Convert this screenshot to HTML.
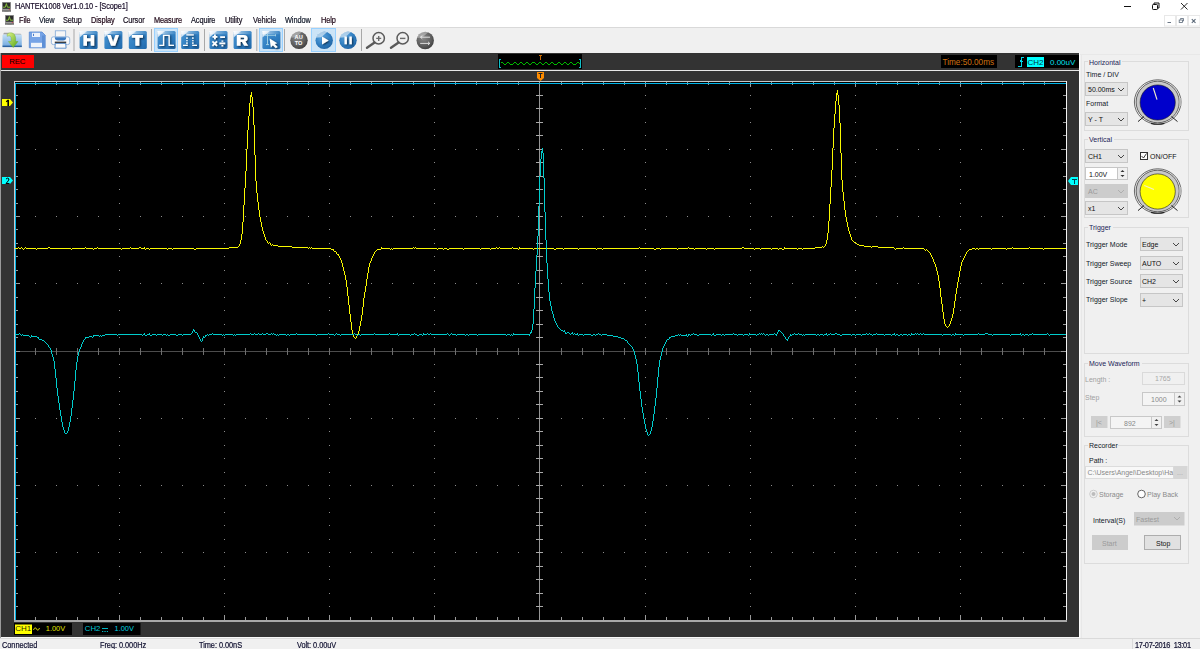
<!DOCTYPE html>
<html><head><meta charset="utf-8">
<style>
*{margin:0;padding:0;box-sizing:border-box}
html,body{width:1200px;height:649px;overflow:hidden;background:#f0f0f0;font-family:"Liberation Sans",sans-serif;position:relative}
.a{position:absolute}
.t{position:absolute;white-space:nowrap;font-size:8.4px;line-height:9px;color:#000;letter-spacing:-0.1px;transform:scaleX(0.88);transform-origin:0 0;-webkit-text-stroke:0.2px currentColor}
#title{left:0;top:0;width:1200px;height:13px;background:#fff}
#menu{left:0;top:13px;width:1200px;height:14px;background:#fff}
#tb{left:0;top:27px;width:1200px;height:26px;background:#f0f0f0}
#main{left:0;top:53px;width:1079px;height:585px;background:#333333;border-left:1px solid #9a9a9a}
#panel{left:1079px;top:53px;width:121px;height:585px;background:#f0f0f0;border-left:1px solid #fdfdfd}
#status{left:0;top:638px;width:1200px;height:11px;background:#f0f0f0;border-top:1px solid #dadada}
.grp{position:absolute;border:1px solid #dcdcdc;border-radius:0}
.glab{position:absolute;background:#f0f0f0;padding:0 2px;font-size:7.4px;line-height:8px;color:#1c2a5a;white-space:nowrap}
.cb{position:absolute;background:#e5e5e5;border:1px solid #c3c3c3;height:14px}
.cb .v{position:absolute;left:4px;top:2px;font-size:7.4px;line-height:9px;color:#111;white-space:nowrap}
.cb svg{position:absolute;right:4px;top:4px}
.dis{background:#cdcdcd;border-color:#cdcdcd}
.dis .v{color:#8a8a8a}
.lbl{position:absolute;font-size:7.4px;line-height:9px;color:#111;white-space:nowrap}
</style></head><body>

<!-- title bar -->
<div id="title" class="a">
  <svg class="a" style="left:2px;top:2px" width="9" height="10" viewBox="0 0 9 10"><rect x="0" y="0" width="9" height="8.5" fill="#9c9c9c"/><rect x="0.8" y="0.8" width="7.4" height="6" fill="#2c2c2c"/><path d="M1,5.2 H3.3 L4.4,1.6 L5.4,5.2 H8" stroke="#86c03a" stroke-width="1" fill="none"/><rect x="6.8" y="7.2" width="1.4" height="0.9" fill="#d04050"/><rect x="0" y="8.5" width="9" height="1" fill="#2a2a2a"/><rect x="2.5" y="9.5" width="4" height="0.5" fill="#777"/></svg>
  <div class="t" style="left:15px;top:1.5px;color:#180c28">HANTEK1008 Ver1.0.10 - [Scope1]</div>
  <svg class="a" style="left:1120px;top:0" width="80" height="13">
    <path d="M4 6.5 H11" stroke="#111" stroke-width="1"/>
    <rect x="32.5" y="4.5" width="5" height="5" rx="0.8" fill="none" stroke="#111"/><path d="M34 4.5 V3 H39 V8 H37.5" fill="none" stroke="#111"/>
    <path d="M61 3 L67.5 9.5 M67.5 3 L61 9.5" stroke="#111" stroke-width="0.9"/>
  </svg>
</div>

<!-- menu bar -->
<div id="menu" class="a">
  <svg class="a" style="left:5px;top:2px" width="9" height="10" viewBox="0 0 9 10"><rect x="0" y="0" width="9" height="8.5" fill="#9c9c9c"/><rect x="0.8" y="0.8" width="7.4" height="6" fill="#2c2c2c"/><path d="M1,5.2 H3.3 L4.4,1.6 L5.4,5.2 H8" stroke="#86c03a" stroke-width="1" fill="none"/><rect x="6.8" y="7.2" width="1.4" height="0.9" fill="#d04050"/><rect x="0" y="8.5" width="9" height="1" fill="#2a2a2a"/><rect x="2.5" y="9.5" width="4" height="0.5" fill="#777"/></svg>
  <div class="t" style="left:19px;top:3px;color:#200818">File</div>
  <div class="t" style="left:39px;top:3px;color:#101828">View</div>
  <div class="t" style="left:63px;top:3px;color:#181020">Setup</div>
  <div class="t" style="left:91px;top:3px;color:#200818">Display</div>
  <div class="t" style="left:123px;top:3px;color:#181020">Cursor</div>
  <div class="t" style="left:154px;top:3px;color:#200818">Measure</div>
  <div class="t" style="left:191px;top:3px;color:#101020">Acquire</div>
  <div class="t" style="left:225px;top:3px;color:#181020">Utility</div>
  <div class="t" style="left:253px;top:3px;color:#181020">Vehicle</div>
  <div class="t" style="left:285px;top:3px;color:#101828">Window</div>
  <div class="t" style="left:321px;top:3px;color:#200818">Help</div>
  <svg class="a" style="left:1164px;top:2px" width="36" height="12">
    <rect x="0.5" y="0.5" width="11" height="10.5" fill="#fff" stroke="#e8e8e8"/>
    <path d="M3.5 7.5 H7" stroke="#5a6878" stroke-width="0.9"/>
    <rect x="12.5" y="0.5" width="11" height="10.5" fill="#fff" stroke="#e8e8e8"/>
    <rect x="15.2" y="5" width="3.3" height="2.5" fill="none" stroke="#5a6878" stroke-width="0.8"/><path d="M16.5 4.6 V3.5 H19.5 V6 H18.8" fill="none" stroke="#5a6878" stroke-width="0.8"/>
    <rect x="24.5" y="0.5" width="11.5" height="10.5" fill="#fff" stroke="#e8e8e8"/>
    <path d="M27.8 4.2 L31.5 7.8 M31.5 4.2 L27.8 7.8" stroke="#5a6878" stroke-width="1.1"/>
  </svg>
</div>

<!-- toolbar -->
<div id="tb" class="a">
<div class="a" style="left:0;top:0;width:1200px;height:1px;background:#d9d9d9"></div>
<svg class="a" style="left:0;top:0" width="440" height="26" viewBox="0 27 440 26">
  <defs>
    <linearGradient id="tile" x1="0" y1="0" x2="1" y2="1">
      <stop offset="0" stop-color="#4b97d4"/>
      <stop offset="0.6" stop-color="#2f7dc0"/>
      <stop offset="1" stop-color="#2169ab"/>
    </linearGradient>
    <linearGradient id="topband" x1="0" y1="0" x2="1" y2="0">
      <stop offset="0" stop-color="#ffffff" stop-opacity="0.9"/>
      <stop offset="0.45" stop-color="#ffffff" stop-opacity="0.35"/>
      <stop offset="1" stop-color="#ffffff" stop-opacity="0.05"/>
    </linearGradient>
    <linearGradient id="wedge" x1="0" y1="0" x2="1" y2="1">
      <stop offset="0" stop-color="#ffffff" stop-opacity="1"/>
      <stop offset="1" stop-color="#dfeaf6" stop-opacity="0.6"/>
    </linearGradient>
    <linearGradient id="fold" x1="0" y1="0" x2="0" y2="1">
      <stop offset="0" stop-color="#c4e0f7"/>
      <stop offset="1" stop-color="#6fa6dd"/>
    </linearGradient>
    <linearGradient id="grn" x1="0" y1="0" x2="1" y2="1">
      <stop offset="0" stop-color="#dff58a"/>
      <stop offset="1" stop-color="#56a514"/>
    </linearGradient>
    <radialGradient id="ball" cx="0.4" cy="0.35" r="0.7">
      <stop offset="0" stop-color="#5ea8e2"/>
      <stop offset="0.65" stop-color="#2f7dc0"/>
      <stop offset="1" stop-color="#1f609f"/>
    </radialGradient>
    <radialGradient id="gball" cx="0.4" cy="0.35" r="0.7">
      <stop offset="0" stop-color="#8a8a8a"/>
      <stop offset="0.65" stop-color="#5e5e5e"/>
      <stop offset="1" stop-color="#3c3c3c"/>
    </radialGradient>
    <filter id="sh" x="-30%" y="-30%" width="160%" height="160%">
      <feGaussianBlur in="SourceAlpha" stdDeviation="0.9"/>
      <feOffset dx="0.8" dy="1.2" result="b"/>
      <feFlood flood-color="#041a33" flood-opacity="0.95"/>
      <feComposite in2="b" operator="in"/>
      <feMerge><feMergeNode/><feMergeNode in="SourceGraphic"/></feMerge>
    </filter>
    <g id="tl">
      <rect x="0" y="0" width="18" height="18" rx="1.5" fill="url(#tile)"/>
      <rect x="0" y="0" width="18" height="3.2" fill="url(#topband)"/>
      <path d="M0,0 H7.5 L0,6.5 Z" fill="url(#wedge)"/>
    </g>
    <g id="bl">
      <circle cx="0" cy="0" r="8.7" fill="url(#ball)"/>
      <path d="M-8.7,-2.5 A8.7,8.7 0 0 1 3,-8.2 L-3,-3 Z" fill="#ffffff" fill-opacity="0.55"/>
    </g>
    <g id="gbl">
      <circle cx="0" cy="0" r="8.7" fill="url(#gball)"/>
      <path d="M-8.7,-2.5 A8.7,8.7 0 0 1 3,-8.2 L-3,-3 Z" fill="#ffffff" fill-opacity="0.35"/>
    </g>
  </defs>
  <!-- separator line under menu -->
  <rect x="0" y="27" width="440" height="1" fill="#e6e6e6"/>
  <!-- open -->
  <path d="M3,34.5 L4,32.8 H9.5 L10.5,33.8 H20.5 L21.5,35 Z" fill="#a3a3a3"/>
  <rect x="2.5" y="34.5" width="19.3" height="12.5" rx="1" fill="url(#fold)"/>
  <rect x="2.5" y="45.6" width="19.3" height="1.5" fill="#2d62a0"/>
  <path d="M7.2,34.2 C9.5,31.8 15.5,32 15.6,38.5 V41.5 H18 L13.2,47.6 L8.4,41.5 H11.2 V38.6 C11.2,36 9.5,35.3 7.2,36.3 Z" fill="url(#grn)" stroke="#5f9e1f" stroke-width="0.35"/>
  <!-- save -->
  <path d="M29.3,32 H42 L45.2,35.2 V47.8 H29.3 Z" fill="#76a3e6" stroke="#5588d2" stroke-width="0.8"/>
  <rect x="42" y="35.5" width="2.8" height="12" fill="#5d8fd6"/>
  <rect x="32" y="32.8" width="8" height="4.2" fill="#eaf1fb"/>
  <rect x="33" y="33.8" width="1" height="2.2" fill="#4a7bc8"/>
  <rect x="31" y="42.8" width="11" height="4.4" fill="#eef3fb"/>
  <!-- print -->
  <rect x="55.3" y="30.8" width="10.4" height="7" fill="#f6f6f6" stroke="#80a8d8" stroke-width="0.8"/>
  <rect x="51.4" y="36.8" width="18.3" height="7.8" rx="2" fill="#fafafa" stroke="#80a8d8" stroke-width="0.8"/>
  <path d="M54.8,37.3 H66.2 Q66.2,40.5 63,40.5 H58 Q54.8,40.5 54.8,37.3 Z" fill="#3d7bc3"/>
  <rect x="54.8" y="41.6" width="11.4" height="1.8" fill="#3a3a3a"/>
  <path d="M55.3,43.4 L54.9,48.2 H66.1 L65.7,43.4 Z" fill="#fafafa" stroke="#3d7bc3" stroke-width="0.8"/>
  <!-- separators -->
  <g fill="#a8a8a8">
    <rect x="73.5" y="29" width="1" height="22"/>
    <rect x="151" y="29" width="1" height="22"/>
    <rect x="204" y="29" width="1" height="22"/>
    <rect x="256.3" y="29" width="1" height="22"/>
    <rect x="284" y="29" width="1" height="22"/>
    <rect x="361" y="29" width="1" height="22"/>
  </g>
  <!-- selected bgs -->
  <rect x="154.5" y="28.5" width="23" height="23" fill="#cce4f7" stroke="#99d1ff"/>
  <rect x="259.5" y="28.5" width="23" height="23" fill="#cce4f7" stroke="#99d1ff"/>
  <rect x="311.5" y="28.5" width="24" height="23" fill="#cce4f7" stroke="#99d1ff"/>
  <!-- tiles -->
  <use href="#tl" x="79.6" y="31"/>
  <use href="#tl" x="104.4" y="31"/>
  <use href="#tl" x="128.8" y="31"/>
  <use href="#tl" x="157.6" y="31"/>
  <use href="#tl" x="181.2" y="31"/>
  <use href="#tl" x="209.5" y="31"/>
  <use href="#tl" x="233.6" y="31"/>
  <use href="#tl" x="262.4" y="31"/>
  <g fill="#fff" filter="url(#sh)">
    <!-- H -->
    <path d="M83.4,35 H87 V38.2 H90.7 V35 H94.2 V45.7 H90.7 V41.2 H87 V45.7 H83.4 Z"/>
    <!-- V -->
    <path d="M107,35 H110.8 L113.1,42 L115.4,35 H119 L115.2,45.7 H111 Z"/>
    <!-- T -->
    <path d="M131.8,35 H143 V37.8 H139.3 V45.7 H135.3 V37.8 H131.8 Z"/>
    <!-- R -->
    <path d="M236.8,35 H243.5 C246.6,35 247.6,36.6 247.6,38.4 C247.6,40 246.7,41 245.4,41.4 L248.2,45.7 H244.2 L242,41.9 H240.5 V45.7 H236.8 Z M240.5,37.6 V39.6 H243 C243.8,39.6 244.2,39.2 244.2,38.6 C244.2,38 243.8,37.6 243,37.6 Z" fill-rule="evenodd"/>
    <!-- pulse -->
    <path d="M159.2,44.7 H162.9 V34.7 H169.8 V44.7 H174 V46 H168.5 V36 H164.2 V46 H159.2 Z"/>
    <!-- pulse 2 -->
    <path d="M186.3,34.2 H193.8 V35.5 H186.3 Z M183,44.8 H187.8 V46 H183 Z M192.2,44.8 H197 V46 H192.2 Z M186.3,37.3 h1.3 v1.8 h-1.3z M186.3,40 h1.3 v1.3 h-1.3z M186.3,42.3 h1.3 v1.6 h-1.3z M192.2,37.3 h1.3 v1.8 h-1.3z M192.2,40 h1.3 v1.3 h-1.3z M192.2,42.3 h1.3 v1.6 h-1.3z"/>
    <!-- math -->
    <path d="M214,34.5 h1.8 v1.5 h1.5 v1.8 h-1.5 v1.5 h-1.8 v-1.5 h-1.5 v-1.8 h1.5 z M220.2,36.2 h4.8 v1.8 h-4.8z M219.4,42.6 h5.8 v1.6 h-5.8z M221.5,40.4 h1.7 v1.4 h-1.7z M221.5,45 h1.7 v1.4 h-1.7z"/>
    <path d="M212.4,41.3 L217,45.8 M217,41.3 L212.4,45.8" stroke="#fff" stroke-width="1.7" fill="none"/>
    <!-- cursor arrow -->
    <path d="M269.6,38.4 L277.2,43.2 L274.6,43.9 L277.6,47 L275.8,48.3 L272.9,45.2 L270.9,47.5 Z"/>
  </g>
  <path d="M264.6,35.3 H275.5 M267.5,33.8 V44.6 M266,44.6 H269 M275.5,34.3 V36.3" stroke="#a9d6e8" stroke-width="0.9" fill="none"/>
  <!-- balls -->
  <use href="#gbl" x="299" y="40.3"/>
  <g font-family="Liberation Sans" font-weight="bold" fill="#fff" font-size="5.6">
    <text x="294.6" y="39.4">AU</text><text x="294.8" y="45.3">TO</text>
  </g>
  <use href="#bl" x="324.2" y="40.3"/>
  <path d="M322,36.4 L328.6,40.4 L322,44.4 Z" fill="#fff" filter="url(#sh)"/>
  <use href="#bl" x="348" y="40.3"/>
  <path d="M344.5,36.5 h2.4 v7.7 h-2.4z M349.4,36.5 h2.4 v7.7 h-2.4z" fill="#fff" filter="url(#sh)"/>
  <!-- zoom -->
  <circle cx="378.7" cy="38.3" r="5.7" fill="#f0f0f0" stroke="#5a5a5a" stroke-width="1.5"/>
  <path d="M374.6,42.6 L367,47.8" stroke="#5a5a5a" stroke-width="2.4" stroke-linecap="round"/>
  <path d="M376.2,38.4 H381.2 M378.7,35.9 V40.9" stroke="#6a6a6a" stroke-width="1.4"/>
  <circle cx="402.7" cy="38.3" r="5.7" fill="#f0f0f0" stroke="#5a5a5a" stroke-width="1.5"/>
  <path d="M398.6,42.6 L391,47.8" stroke="#5a5a5a" stroke-width="2.4" stroke-linecap="round"/>
  <path d="M400,38.4 H405.4" stroke="#6a6a6a" stroke-width="1.4"/>
  <use href="#gbl" x="425.2" y="40.5"/>
  <path d="M430,37.2 H420.5 L422.3,35.6 M420.5,37.2 L422.3,38.8 M420.2,43.4 H429.8 L428,41.8 M429.8,43.4 L428,45" fill="none" stroke="#eaeaea" stroke-width="0.9"/>
</svg>

</div>

<!-- main scope area -->
<div id="main" class="a"></div>
<svg class="a" style="left:0;top:0" width="1079" height="649">
  <!-- top bar -->
  <rect x="2" y="55" width="32" height="13" fill="#ff0000"/>
  <text x="9.3" y="64.2" font-family="Liberation Sans" font-size="7.8" fill="#000" letter-spacing="-0.2">REC</text>
  <rect x="498" y="54" width="84" height="15" fill="#000"/>
  <path d="M501,62h1v1h-1zM502,62h1v1h-1zM503,63h1v1h-1zM504,64h1v1h-1zM505,64h1v1h-1zM506,63h1v1h-1zM507,62h1v1h-1zM508,62h1v1h-1zM509,63h1v1h-1zM510,64h1v1h-1zM511,64h1v1h-1zM512,64h1v1h-1zM513,63h1v1h-1zM514,62h1v1h-1zM515,62h1v1h-1zM516,63h1v1h-1zM517,64h1v1h-1zM518,64h1v1h-1zM519,63h1v1h-1zM520,62h1v1h-1zM521,62h1v1h-1zM522,63h1v1h-1zM523,64h1v1h-1zM524,64h1v1h-1zM525,63h1v1h-1zM526,62h1v1h-1zM527,62h1v1h-1zM528,63h1v1h-1zM529,64h1v1h-1zM530,64h1v1h-1zM531,63h1v1h-1zM532,62h1v1h-1zM533,62h1v1h-1zM534,62h1v1h-1zM535,63h1v1h-1zM536,64h1v1h-1zM537,64h1v1h-1zM538,63h1v1h-1zM539,62h1v1h-1zM540,62h1v1h-1zM541,63h1v1h-1zM542,64h1v1h-1zM543,64h1v1h-1zM544,63h1v1h-1zM545,62h1v1h-1zM546,62h1v1h-1zM547,63h1v1h-1zM548,64h1v1h-1zM549,64h1v1h-1zM550,63h1v1h-1zM551,62h1v1h-1zM552,62h1v1h-1zM553,63h1v1h-1zM554,64h1v1h-1zM555,64h1v1h-1zM556,64h1v1h-1zM557,63h1v1h-1zM558,62h1v1h-1zM559,62h1v1h-1zM560,63h1v1h-1zM561,64h1v1h-1zM562,64h1v1h-1zM563,63h1v1h-1zM564,62h1v1h-1zM565,62h1v1h-1zM566,63h1v1h-1zM567,64h1v1h-1zM568,64h1v1h-1zM569,63h1v1h-1zM570,62h1v1h-1zM571,62h1v1h-1zM572,63h1v1h-1zM573,64h1v1h-1zM574,64h1v1h-1zM575,64h1v1h-1zM576,63h1v1h-1zM577,62h1v1h-1zM578,62h1v1h-1zM579,63h1v1h-1z" fill="#00b800" shape-rendering="crispEdges"/>
  <path d="M499,59h1v9h-1z M500,59h1v1h-1z M500,67h1v1h-1z M580,59h1v9h-1z M579,59h1v1h-1z M579,67h1v1h-1z" fill="#10c0c8" shape-rendering="crispEdges"/>
  <path d="M539,55h3v1h-3z M540,56h1v3.5h-1z" fill="#c86800" shape-rendering="crispEdges"/>
  <rect x="941" y="55" width="56" height="13" fill="#000"/>
  <text x="942.5" y="65" font-family="Liberation Sans" font-size="8.2" fill="#d07010">Time:50.00ms</text>
  <rect x="1015" y="55" width="64" height="13" fill="#000"/>
  <path d="M1018,66h3v1h-3z M1020.5,57h1v10h-1z M1021,57h3v1h-3z M1019.5,60.5h3v1h-3z M1020,59.5h2v1h-2z" fill="#00d8e8" shape-rendering="crispEdges"/>
  <rect x="1027" y="57" width="17" height="10" fill="#00ffff"/>
  <text x="1027.5" y="65" font-family="Liberation Sans" font-size="8" fill="#003040">CH2</text>
  <text x="1050" y="65" font-family="Liberation Sans" font-size="8" fill="#00e0f0">0.00uV</text>
  <rect x="1" y="70" width="1078" height="1" fill="#e8e8e8"/>
  <!-- T marker -->
  <path d="M537,72 H544 V78 L540.5,81 L537,78 Z" fill="#ff8c00"/>
  <path d="M538.5,73.5 H542.5 M540.5,73.5 V78" stroke="#222" stroke-width="1"/>
  <!-- screen -->
  <rect x="14" y="81" width="1053" height="541" fill="#c8c8c8"/>
  <rect x="15" y="82" width="1051" height="538" fill="#000"/>
  <rect x="1066" y="81" width="1" height="540" fill="#f4f4f4"/>
  <rect x="14" y="620" width="1053" height="2" fill="#a8a8a8"/>
  <g fill="#8c8c8c">
<path d="M35,149h1v1h-1zM35,216h1v1h-1zM35,283h1v1h-1zM35,418h1v1h-1zM35,485h1v1h-1zM35,552h1v1h-1zM56,149h1v1h-1zM56,216h1v1h-1zM56,283h1v1h-1zM56,418h1v1h-1zM56,485h1v1h-1zM56,552h1v1h-1zM77,149h1v1h-1zM77,216h1v1h-1zM77,283h1v1h-1zM77,418h1v1h-1zM77,485h1v1h-1zM77,552h1v1h-1zM98,149h1v1h-1zM98,216h1v1h-1zM98,283h1v1h-1zM98,418h1v1h-1zM98,485h1v1h-1zM98,552h1v1h-1zM119,95h1v1h-1zM119,108h1v1h-1zM119,122h1v1h-1zM119,135h1v1h-1zM119,149h1v1h-1zM119,162h1v1h-1zM119,176h1v1h-1zM119,189h1v1h-1zM119,203h1v1h-1zM119,216h1v1h-1zM119,229h1v1h-1zM119,243h1v1h-1zM119,256h1v1h-1zM119,270h1v1h-1zM119,283h1v1h-1zM119,297h1v1h-1zM119,310h1v1h-1zM119,324h1v1h-1zM119,337h1v1h-1zM119,364h1v1h-1zM119,377h1v1h-1zM119,391h1v1h-1zM119,404h1v1h-1zM119,418h1v1h-1zM119,431h1v1h-1zM119,445h1v1h-1zM119,458h1v1h-1zM119,472h1v1h-1zM119,485h1v1h-1zM119,498h1v1h-1zM119,512h1v1h-1zM119,525h1v1h-1zM119,539h1v1h-1zM119,552h1v1h-1zM119,566h1v1h-1zM119,579h1v1h-1zM119,593h1v1h-1zM119,606h1v1h-1zM140,149h1v1h-1zM140,216h1v1h-1zM140,283h1v1h-1zM140,418h1v1h-1zM140,485h1v1h-1zM140,552h1v1h-1zM161,149h1v1h-1zM161,216h1v1h-1zM161,283h1v1h-1zM161,418h1v1h-1zM161,485h1v1h-1zM161,552h1v1h-1zM182,149h1v1h-1zM182,216h1v1h-1zM182,283h1v1h-1zM182,418h1v1h-1zM182,485h1v1h-1zM182,552h1v1h-1zM203,149h1v1h-1zM203,216h1v1h-1zM203,283h1v1h-1zM203,418h1v1h-1zM203,485h1v1h-1zM203,552h1v1h-1zM224,95h1v1h-1zM224,108h1v1h-1zM224,122h1v1h-1zM224,135h1v1h-1zM224,149h1v1h-1zM224,162h1v1h-1zM224,176h1v1h-1zM224,189h1v1h-1zM224,203h1v1h-1zM224,216h1v1h-1zM224,229h1v1h-1zM224,243h1v1h-1zM224,256h1v1h-1zM224,270h1v1h-1zM224,283h1v1h-1zM224,297h1v1h-1zM224,310h1v1h-1zM224,324h1v1h-1zM224,337h1v1h-1zM224,364h1v1h-1zM224,377h1v1h-1zM224,391h1v1h-1zM224,404h1v1h-1zM224,418h1v1h-1zM224,431h1v1h-1zM224,445h1v1h-1zM224,458h1v1h-1zM224,472h1v1h-1zM224,485h1v1h-1zM224,498h1v1h-1zM224,512h1v1h-1zM224,525h1v1h-1zM224,539h1v1h-1zM224,552h1v1h-1zM224,566h1v1h-1zM224,579h1v1h-1zM224,593h1v1h-1zM224,606h1v1h-1zM245,149h1v1h-1zM245,216h1v1h-1zM245,283h1v1h-1zM245,418h1v1h-1zM245,485h1v1h-1zM245,552h1v1h-1zM266,149h1v1h-1zM266,216h1v1h-1zM266,283h1v1h-1zM266,418h1v1h-1zM266,485h1v1h-1zM266,552h1v1h-1zM287,149h1v1h-1zM287,216h1v1h-1zM287,283h1v1h-1zM287,418h1v1h-1zM287,485h1v1h-1zM287,552h1v1h-1zM308,149h1v1h-1zM308,216h1v1h-1zM308,283h1v1h-1zM308,418h1v1h-1zM308,485h1v1h-1zM308,552h1v1h-1zM329,95h1v1h-1zM329,108h1v1h-1zM329,122h1v1h-1zM329,135h1v1h-1zM329,149h1v1h-1zM329,162h1v1h-1zM329,176h1v1h-1zM329,189h1v1h-1zM329,203h1v1h-1zM329,216h1v1h-1zM329,229h1v1h-1zM329,243h1v1h-1zM329,256h1v1h-1zM329,270h1v1h-1zM329,283h1v1h-1zM329,297h1v1h-1zM329,310h1v1h-1zM329,324h1v1h-1zM329,337h1v1h-1zM329,364h1v1h-1zM329,377h1v1h-1zM329,391h1v1h-1zM329,404h1v1h-1zM329,418h1v1h-1zM329,431h1v1h-1zM329,445h1v1h-1zM329,458h1v1h-1zM329,472h1v1h-1zM329,485h1v1h-1zM329,498h1v1h-1zM329,512h1v1h-1zM329,525h1v1h-1zM329,539h1v1h-1zM329,552h1v1h-1zM329,566h1v1h-1zM329,579h1v1h-1zM329,593h1v1h-1zM329,606h1v1h-1zM350,149h1v1h-1zM350,216h1v1h-1zM350,283h1v1h-1zM350,418h1v1h-1zM350,485h1v1h-1zM350,552h1v1h-1zM371,149h1v1h-1zM371,216h1v1h-1zM371,283h1v1h-1zM371,418h1v1h-1zM371,485h1v1h-1zM371,552h1v1h-1zM392,149h1v1h-1zM392,216h1v1h-1zM392,283h1v1h-1zM392,418h1v1h-1zM392,485h1v1h-1zM392,552h1v1h-1zM413,149h1v1h-1zM413,216h1v1h-1zM413,283h1v1h-1zM413,418h1v1h-1zM413,485h1v1h-1zM413,552h1v1h-1zM434,95h1v1h-1zM434,108h1v1h-1zM434,122h1v1h-1zM434,135h1v1h-1zM434,149h1v1h-1zM434,162h1v1h-1zM434,176h1v1h-1zM434,189h1v1h-1zM434,203h1v1h-1zM434,216h1v1h-1zM434,229h1v1h-1zM434,243h1v1h-1zM434,256h1v1h-1zM434,270h1v1h-1zM434,283h1v1h-1zM434,297h1v1h-1zM434,310h1v1h-1zM434,324h1v1h-1zM434,337h1v1h-1zM434,364h1v1h-1zM434,377h1v1h-1zM434,391h1v1h-1zM434,404h1v1h-1zM434,418h1v1h-1zM434,431h1v1h-1zM434,445h1v1h-1zM434,458h1v1h-1zM434,472h1v1h-1zM434,485h1v1h-1zM434,498h1v1h-1zM434,512h1v1h-1zM434,525h1v1h-1zM434,539h1v1h-1zM434,552h1v1h-1zM434,566h1v1h-1zM434,579h1v1h-1zM434,593h1v1h-1zM434,606h1v1h-1zM455,149h1v1h-1zM455,216h1v1h-1zM455,283h1v1h-1zM455,418h1v1h-1zM455,485h1v1h-1zM455,552h1v1h-1zM476,149h1v1h-1zM476,216h1v1h-1zM476,283h1v1h-1zM476,418h1v1h-1zM476,485h1v1h-1zM476,552h1v1h-1zM497,149h1v1h-1zM497,216h1v1h-1zM497,283h1v1h-1zM497,418h1v1h-1zM497,485h1v1h-1zM497,552h1v1h-1zM518,149h1v1h-1zM518,216h1v1h-1zM518,283h1v1h-1zM518,418h1v1h-1zM518,485h1v1h-1zM518,552h1v1h-1zM561,149h1v1h-1zM561,216h1v1h-1zM561,283h1v1h-1zM561,418h1v1h-1zM561,485h1v1h-1zM561,552h1v1h-1zM582,149h1v1h-1zM582,216h1v1h-1zM582,283h1v1h-1zM582,418h1v1h-1zM582,485h1v1h-1zM582,552h1v1h-1zM603,149h1v1h-1zM603,216h1v1h-1zM603,283h1v1h-1zM603,418h1v1h-1zM603,485h1v1h-1zM603,552h1v1h-1zM624,149h1v1h-1zM624,216h1v1h-1zM624,283h1v1h-1zM624,418h1v1h-1zM624,485h1v1h-1zM624,552h1v1h-1zM645,95h1v1h-1zM645,108h1v1h-1zM645,122h1v1h-1zM645,135h1v1h-1zM645,149h1v1h-1zM645,162h1v1h-1zM645,176h1v1h-1zM645,189h1v1h-1zM645,203h1v1h-1zM645,216h1v1h-1zM645,229h1v1h-1zM645,243h1v1h-1zM645,256h1v1h-1zM645,270h1v1h-1zM645,283h1v1h-1zM645,297h1v1h-1zM645,310h1v1h-1zM645,324h1v1h-1zM645,337h1v1h-1zM645,364h1v1h-1zM645,377h1v1h-1zM645,391h1v1h-1zM645,404h1v1h-1zM645,418h1v1h-1zM645,431h1v1h-1zM645,445h1v1h-1zM645,458h1v1h-1zM645,472h1v1h-1zM645,485h1v1h-1zM645,498h1v1h-1zM645,512h1v1h-1zM645,525h1v1h-1zM645,539h1v1h-1zM645,552h1v1h-1zM645,566h1v1h-1zM645,579h1v1h-1zM645,593h1v1h-1zM645,606h1v1h-1zM666,149h1v1h-1zM666,216h1v1h-1zM666,283h1v1h-1zM666,418h1v1h-1zM666,485h1v1h-1zM666,552h1v1h-1zM687,149h1v1h-1zM687,216h1v1h-1zM687,283h1v1h-1zM687,418h1v1h-1zM687,485h1v1h-1zM687,552h1v1h-1zM708,149h1v1h-1zM708,216h1v1h-1zM708,283h1v1h-1zM708,418h1v1h-1zM708,485h1v1h-1zM708,552h1v1h-1zM729,149h1v1h-1zM729,216h1v1h-1zM729,283h1v1h-1zM729,418h1v1h-1zM729,485h1v1h-1zM729,552h1v1h-1zM750,95h1v1h-1zM750,108h1v1h-1zM750,122h1v1h-1zM750,135h1v1h-1zM750,149h1v1h-1zM750,162h1v1h-1zM750,176h1v1h-1zM750,189h1v1h-1zM750,203h1v1h-1zM750,216h1v1h-1zM750,229h1v1h-1zM750,243h1v1h-1zM750,256h1v1h-1zM750,270h1v1h-1zM750,283h1v1h-1zM750,297h1v1h-1zM750,310h1v1h-1zM750,324h1v1h-1zM750,337h1v1h-1zM750,364h1v1h-1zM750,377h1v1h-1zM750,391h1v1h-1zM750,404h1v1h-1zM750,418h1v1h-1zM750,431h1v1h-1zM750,445h1v1h-1zM750,458h1v1h-1zM750,472h1v1h-1zM750,485h1v1h-1zM750,498h1v1h-1zM750,512h1v1h-1zM750,525h1v1h-1zM750,539h1v1h-1zM750,552h1v1h-1zM750,566h1v1h-1zM750,579h1v1h-1zM750,593h1v1h-1zM750,606h1v1h-1zM771,149h1v1h-1zM771,216h1v1h-1zM771,283h1v1h-1zM771,418h1v1h-1zM771,485h1v1h-1zM771,552h1v1h-1zM792,149h1v1h-1zM792,216h1v1h-1zM792,283h1v1h-1zM792,418h1v1h-1zM792,485h1v1h-1zM792,552h1v1h-1zM813,149h1v1h-1zM813,216h1v1h-1zM813,283h1v1h-1zM813,418h1v1h-1zM813,485h1v1h-1zM813,552h1v1h-1zM834,149h1v1h-1zM834,216h1v1h-1zM834,283h1v1h-1zM834,418h1v1h-1zM834,485h1v1h-1zM834,552h1v1h-1zM855,95h1v1h-1zM855,108h1v1h-1zM855,122h1v1h-1zM855,135h1v1h-1zM855,149h1v1h-1zM855,162h1v1h-1zM855,176h1v1h-1zM855,189h1v1h-1zM855,203h1v1h-1zM855,216h1v1h-1zM855,229h1v1h-1zM855,243h1v1h-1zM855,256h1v1h-1zM855,270h1v1h-1zM855,283h1v1h-1zM855,297h1v1h-1zM855,310h1v1h-1zM855,324h1v1h-1zM855,337h1v1h-1zM855,364h1v1h-1zM855,377h1v1h-1zM855,391h1v1h-1zM855,404h1v1h-1zM855,418h1v1h-1zM855,431h1v1h-1zM855,445h1v1h-1zM855,458h1v1h-1zM855,472h1v1h-1zM855,485h1v1h-1zM855,498h1v1h-1zM855,512h1v1h-1zM855,525h1v1h-1zM855,539h1v1h-1zM855,552h1v1h-1zM855,566h1v1h-1zM855,579h1v1h-1zM855,593h1v1h-1zM855,606h1v1h-1zM876,149h1v1h-1zM876,216h1v1h-1zM876,283h1v1h-1zM876,418h1v1h-1zM876,485h1v1h-1zM876,552h1v1h-1zM897,149h1v1h-1zM897,216h1v1h-1zM897,283h1v1h-1zM897,418h1v1h-1zM897,485h1v1h-1zM897,552h1v1h-1zM918,149h1v1h-1zM918,216h1v1h-1zM918,283h1v1h-1zM918,418h1v1h-1zM918,485h1v1h-1zM918,552h1v1h-1zM939,149h1v1h-1zM939,216h1v1h-1zM939,283h1v1h-1zM939,418h1v1h-1zM939,485h1v1h-1zM939,552h1v1h-1zM960,95h1v1h-1zM960,108h1v1h-1zM960,122h1v1h-1zM960,135h1v1h-1zM960,149h1v1h-1zM960,162h1v1h-1zM960,176h1v1h-1zM960,189h1v1h-1zM960,203h1v1h-1zM960,216h1v1h-1zM960,229h1v1h-1zM960,243h1v1h-1zM960,256h1v1h-1zM960,270h1v1h-1zM960,283h1v1h-1zM960,297h1v1h-1zM960,310h1v1h-1zM960,324h1v1h-1zM960,337h1v1h-1zM960,364h1v1h-1zM960,377h1v1h-1zM960,391h1v1h-1zM960,404h1v1h-1zM960,418h1v1h-1zM960,431h1v1h-1zM960,445h1v1h-1zM960,458h1v1h-1zM960,472h1v1h-1zM960,485h1v1h-1zM960,498h1v1h-1zM960,512h1v1h-1zM960,525h1v1h-1zM960,539h1v1h-1zM960,552h1v1h-1zM960,566h1v1h-1zM960,579h1v1h-1zM960,593h1v1h-1zM960,606h1v1h-1zM981,149h1v1h-1zM981,216h1v1h-1zM981,283h1v1h-1zM981,418h1v1h-1zM981,485h1v1h-1zM981,552h1v1h-1zM1002,149h1v1h-1zM1002,216h1v1h-1zM1002,283h1v1h-1zM1002,418h1v1h-1zM1002,485h1v1h-1zM1002,552h1v1h-1zM1023,149h1v1h-1zM1023,216h1v1h-1zM1023,283h1v1h-1zM1023,418h1v1h-1zM1023,485h1v1h-1zM1023,552h1v1h-1zM1044,149h1v1h-1zM1044,216h1v1h-1zM1044,283h1v1h-1zM1044,418h1v1h-1zM1044,485h1v1h-1zM1044,552h1v1h-1z" shape-rendering="crispEdges"/>
  </g>
  <path d="M15,351h1051v1h-1051z" fill="#4c4c4c" shape-rendering="crispEdges"/>
  <path d="M539,82h1v538h-1z" fill="#959595" shape-rendering="crispEdges"/>
  <path d="M35,82h1v3h-1zM35,617h1v3h-1zM56,82h1v3h-1zM56,617h1v3h-1zM77,82h1v3h-1zM77,617h1v3h-1zM98,82h1v3h-1zM98,617h1v3h-1zM119,82h1v5h-1zM119,615h1v5h-1zM140,82h1v3h-1zM140,617h1v3h-1zM161,82h1v3h-1zM161,617h1v3h-1zM182,82h1v3h-1zM182,617h1v3h-1zM203,82h1v3h-1zM203,617h1v3h-1zM224,82h1v5h-1zM224,615h1v5h-1zM245,82h1v3h-1zM245,617h1v3h-1zM266,82h1v3h-1zM266,617h1v3h-1zM287,82h1v3h-1zM287,617h1v3h-1zM308,82h1v3h-1zM308,617h1v3h-1zM329,82h1v5h-1zM329,615h1v5h-1zM350,82h1v3h-1zM350,617h1v3h-1zM371,82h1v3h-1zM371,617h1v3h-1zM392,82h1v3h-1zM392,617h1v3h-1zM413,82h1v3h-1zM413,617h1v3h-1zM434,82h1v5h-1zM434,615h1v5h-1zM455,82h1v3h-1zM455,617h1v3h-1zM476,82h1v3h-1zM476,617h1v3h-1zM497,82h1v3h-1zM497,617h1v3h-1zM518,82h1v3h-1zM518,617h1v3h-1zM539,82h1v5h-1zM539,615h1v5h-1zM561,82h1v3h-1zM561,617h1v3h-1zM582,82h1v3h-1zM582,617h1v3h-1zM603,82h1v3h-1zM603,617h1v3h-1zM624,82h1v3h-1zM624,617h1v3h-1zM645,82h1v5h-1zM645,615h1v5h-1zM666,82h1v3h-1zM666,617h1v3h-1zM687,82h1v3h-1zM687,617h1v3h-1zM708,82h1v3h-1zM708,617h1v3h-1zM729,82h1v3h-1zM729,617h1v3h-1zM750,82h1v5h-1zM750,615h1v5h-1zM771,82h1v3h-1zM771,617h1v3h-1zM792,82h1v3h-1zM792,617h1v3h-1zM813,82h1v3h-1zM813,617h1v3h-1zM834,82h1v3h-1zM834,617h1v3h-1zM855,82h1v5h-1zM855,615h1v5h-1zM876,82h1v3h-1zM876,617h1v3h-1zM897,82h1v3h-1zM897,617h1v3h-1zM918,82h1v3h-1zM918,617h1v3h-1zM939,82h1v3h-1zM939,617h1v3h-1zM960,82h1v5h-1zM960,615h1v5h-1zM981,82h1v3h-1zM981,617h1v3h-1zM1002,82h1v3h-1zM1002,617h1v3h-1zM1023,82h1v3h-1zM1023,617h1v3h-1zM1044,82h1v3h-1zM1044,617h1v3h-1zM15,95h3v1h-3zM1063,95h3v1h-3zM15,108h3v1h-3zM1063,108h3v1h-3zM15,122h3v1h-3zM1063,122h3v1h-3zM15,135h3v1h-3zM1063,135h3v1h-3zM15,149h5v1h-5zM1061,149h5v1h-5zM15,162h3v1h-3zM1063,162h3v1h-3zM15,176h3v1h-3zM1063,176h3v1h-3zM15,189h3v1h-3zM1063,189h3v1h-3zM15,203h3v1h-3zM1063,203h3v1h-3zM15,216h5v1h-5zM1061,216h5v1h-5zM15,229h3v1h-3zM1063,229h3v1h-3zM15,243h3v1h-3zM1063,243h3v1h-3zM15,256h3v1h-3zM1063,256h3v1h-3zM15,270h3v1h-3zM1063,270h3v1h-3zM15,283h5v1h-5zM1061,283h5v1h-5zM15,297h3v1h-3zM1063,297h3v1h-3zM15,310h3v1h-3zM1063,310h3v1h-3zM15,324h3v1h-3zM1063,324h3v1h-3zM15,337h3v1h-3zM1063,337h3v1h-3zM15,351h5v1h-5zM1061,351h5v1h-5zM15,364h3v1h-3zM1063,364h3v1h-3zM15,377h3v1h-3zM1063,377h3v1h-3zM15,391h3v1h-3zM1063,391h3v1h-3zM15,404h3v1h-3zM1063,404h3v1h-3zM15,418h5v1h-5zM1061,418h5v1h-5zM15,431h3v1h-3zM1063,431h3v1h-3zM15,445h3v1h-3zM1063,445h3v1h-3zM15,458h3v1h-3zM1063,458h3v1h-3zM15,472h3v1h-3zM1063,472h3v1h-3zM15,485h5v1h-5zM1061,485h5v1h-5zM15,498h3v1h-3zM1063,498h3v1h-3zM15,512h3v1h-3zM1063,512h3v1h-3zM15,525h3v1h-3zM1063,525h3v1h-3zM15,539h3v1h-3zM1063,539h3v1h-3zM15,552h5v1h-5zM1061,552h5v1h-5zM15,566h3v1h-3zM1063,566h3v1h-3zM15,579h3v1h-3zM1063,579h3v1h-3zM15,593h3v1h-3zM1063,593h3v1h-3zM15,606h3v1h-3zM1063,606h3v1h-3z" fill="#9a9a9a" shape-rendering="crispEdges"/><path d="M35,348h1v7h-1zM56,348h1v7h-1zM77,348h1v7h-1zM98,348h1v7h-1zM119,348h1v7h-1zM140,348h1v7h-1zM161,348h1v7h-1zM182,348h1v7h-1zM203,348h1v7h-1zM224,348h1v7h-1zM245,348h1v7h-1zM266,348h1v7h-1zM287,348h1v7h-1zM308,348h1v7h-1zM329,348h1v7h-1zM350,348h1v7h-1zM371,348h1v7h-1zM392,348h1v7h-1zM413,348h1v7h-1zM434,348h1v7h-1zM455,348h1v7h-1zM476,348h1v7h-1zM497,348h1v7h-1zM518,348h1v7h-1zM561,348h1v7h-1zM582,348h1v7h-1zM603,348h1v7h-1zM624,348h1v7h-1zM645,348h1v7h-1zM666,348h1v7h-1zM687,348h1v7h-1zM708,348h1v7h-1zM729,348h1v7h-1zM750,348h1v7h-1zM771,348h1v7h-1zM792,348h1v7h-1zM813,348h1v7h-1zM834,348h1v7h-1zM855,348h1v7h-1zM876,348h1v7h-1zM897,348h1v7h-1zM918,348h1v7h-1zM939,348h1v7h-1zM960,348h1v7h-1zM981,348h1v7h-1zM1002,348h1v7h-1zM1023,348h1v7h-1zM1044,348h1v7h-1z" fill="#6e6e6e" shape-rendering="crispEdges"/><path d="M536,95h7v1h-7zM536,108h7v1h-7zM536,122h7v1h-7zM536,135h7v1h-7zM536,149h7v1h-7zM536,162h7v1h-7zM536,176h7v1h-7zM536,189h7v1h-7zM536,203h7v1h-7zM536,216h7v1h-7zM536,229h7v1h-7zM536,243h7v1h-7zM536,256h7v1h-7zM536,270h7v1h-7zM536,283h7v1h-7zM536,297h7v1h-7zM536,310h7v1h-7zM536,324h7v1h-7zM536,337h7v1h-7zM536,364h7v1h-7zM536,377h7v1h-7zM536,391h7v1h-7zM536,404h7v1h-7zM536,418h7v1h-7zM536,431h7v1h-7zM536,445h7v1h-7zM536,458h7v1h-7zM536,472h7v1h-7zM536,485h7v1h-7zM536,498h7v1h-7zM536,512h7v1h-7zM536,525h7v1h-7zM536,539h7v1h-7zM536,552h7v1h-7zM536,566h7v1h-7zM536,579h7v1h-7zM536,593h7v1h-7zM536,606h7v1h-7z" fill="#a8a8a8" shape-rendering="crispEdges" fill="#9a9a9a" shape-rendering="crispEdges"/>
  <rect x="15" y="83" width="1051" height="1" fill="#00b4e6"/>
  <rect x="15" y="83" width="1" height="537" fill="#00b4e6"/>
  <!-- traces -->
  <path d="M15,248h1v1h-1zM16,248h1v1h-1zM17,248h1v1h-1zM18,247h1v1h-1zM19,248h1v1h-1zM20,248h1v1h-1zM21,247h1v1h-1zM22,248h1v1h-1zM23,249h1v1h-1zM24,248h1v1h-1zM25,247h1v1h-1zM26,248h1v1h-1zM27,248h1v1h-1zM28,248h1v1h-1zM29,248h1v1h-1zM30,248h1v1h-1zM31,248h1v1h-1zM32,248h1v1h-1zM33,248h1v1h-1zM34,248h1v1h-1zM35,248h1v1h-1zM36,249h1v1h-1zM37,248h1v1h-1zM38,248h1v1h-1zM39,248h1v1h-1zM40,248h1v1h-1zM41,248h1v1h-1zM42,248h1v1h-1zM43,248h1v1h-1zM44,248h1v1h-1zM45,248h1v1h-1zM46,248h1v1h-1zM47,248h1v1h-1zM48,247h1v1h-1zM49,247h1v1h-1zM50,248h1v1h-1zM51,248h1v1h-1zM52,248h1v1h-1zM53,248h1v1h-1zM54,248h1v1h-1zM55,248h1v1h-1zM56,248h1v1h-1zM57,248h1v1h-1zM58,248h1v1h-1zM59,248h1v1h-1zM60,248h1v1h-1zM61,248h1v1h-1zM62,248h1v1h-1zM63,248h1v1h-1zM64,248h1v1h-1zM65,248h1v1h-1zM66,248h1v1h-1zM67,248h1v1h-1zM68,248h1v1h-1zM69,248h1v1h-1zM70,248h1v1h-1zM71,249h1v1h-1zM72,248h1v1h-1zM73,248h1v1h-1zM74,248h1v1h-1zM75,248h1v1h-1zM76,248h1v1h-1zM77,248h1v1h-1zM78,248h1v1h-1zM79,248h1v1h-1zM80,248h1v1h-1zM81,248h1v1h-1zM82,248h1v1h-1zM83,248h1v1h-1zM84,248h1v1h-1zM85,247h1v1h-1zM86,248h1v1h-1zM87,248h1v1h-1zM88,248h1v1h-1zM89,248h1v1h-1zM90,248h1v1h-1zM91,248h1v1h-1zM92,248h1v1h-1zM93,249h1v1h-1zM94,248h1v1h-1zM95,248h1v1h-1zM96,248h1v1h-1zM97,247h1v1h-1zM98,248h1v1h-1zM99,248h1v1h-1zM100,248h1v1h-1zM101,248h1v1h-1zM102,248h1v1h-1zM103,248h1v1h-1zM104,248h1v1h-1zM105,248h1v1h-1zM106,248h1v1h-1zM107,248h1v1h-1zM108,248h1v1h-1zM109,248h1v1h-1zM110,248h1v1h-1zM111,248h1v1h-1zM112,248h1v1h-1zM113,248h1v1h-1zM114,248h1v1h-1zM115,248h1v1h-1zM116,248h1v1h-1zM117,248h1v1h-1zM118,248h1v1h-1zM119,248h1v1h-1zM120,248h1v1h-1zM121,249h1v1h-1zM122,248h1v1h-1zM123,248h1v1h-1zM124,248h1v1h-1zM125,248h1v1h-1zM126,248h1v1h-1zM127,248h1v1h-1zM128,248h1v1h-1zM129,248h1v1h-1zM130,247h1v1h-1zM131,248h1v1h-1zM132,248h1v1h-1zM133,248h1v1h-1zM134,248h1v1h-1zM135,248h1v1h-1zM136,248h1v1h-1zM137,248h1v1h-1zM138,248h1v1h-1zM139,247h1v1h-1zM140,247h1v1h-1zM141,248h1v1h-1zM142,248h1v1h-1zM143,248h1v1h-1zM144,247h1v2h-1zM145,249h1v1h-1zM146,248h1v1h-1zM147,248h1v1h-1zM148,248h1v1h-1zM149,249h1v1h-1zM150,248h1v1h-1zM151,248h1v1h-1zM152,248h1v1h-1zM153,248h1v1h-1zM154,248h1v1h-1zM155,248h1v1h-1zM156,248h1v1h-1zM157,248h1v1h-1zM158,248h1v1h-1zM159,248h1v1h-1zM160,248h1v1h-1zM161,248h1v1h-1zM162,248h1v1h-1zM163,248h1v1h-1zM164,248h1v1h-1zM165,248h1v1h-1zM166,248h1v1h-1zM167,249h1v1h-1zM168,248h1v1h-1zM169,248h1v1h-1zM170,248h1v1h-1zM171,248h1v1h-1zM172,249h1v1h-1zM173,248h1v1h-1zM174,248h1v1h-1zM175,248h1v1h-1zM176,248h1v1h-1zM177,248h1v1h-1zM178,248h1v1h-1zM179,248h1v1h-1zM180,248h1v1h-1zM181,248h1v1h-1zM182,248h1v1h-1zM183,248h1v1h-1zM184,248h1v1h-1zM185,248h1v1h-1zM186,248h1v1h-1zM187,248h1v1h-1zM188,248h1v1h-1zM189,248h1v1h-1zM190,248h1v1h-1zM191,248h1v1h-1zM192,248h1v1h-1zM193,248h1v1h-1zM194,249h1v1h-1zM195,249h1v1h-1zM196,248h1v1h-1zM197,248h1v1h-1zM198,248h1v1h-1zM199,248h1v1h-1zM200,248h1v1h-1zM201,248h1v1h-1zM202,248h1v1h-1zM203,248h1v1h-1zM204,248h1v1h-1zM205,248h1v1h-1zM206,248h1v1h-1zM207,248h1v1h-1zM208,248h1v1h-1zM209,248h1v1h-1zM210,248h1v1h-1zM211,248h1v1h-1zM212,248h1v1h-1zM213,248h1v1h-1zM214,248h1v1h-1zM215,248h1v1h-1zM216,248h1v1h-1zM217,248h1v1h-1zM218,248h1v1h-1zM219,248h1v1h-1zM220,248h1v1h-1zM221,248h1v1h-1zM222,248h1v1h-1zM223,248h1v1h-1zM224,248h1v1h-1zM225,248h1v1h-1zM226,248h1v1h-1zM227,248h1v1h-1zM228,248h1v1h-1zM229,247h1v1h-1zM230,247h1v1h-1zM231,247h1v1h-1zM232,247h1v1h-1zM233,247h1v1h-1zM234,247h1v1h-1zM235,247h1v1h-1zM236,247h1v1h-1zM237,247h1v1h-1zM238,246h1v1h-1zM239,244h1v2h-1zM240,240h1v4h-1zM241,234h1v6h-1zM242,222h1v12h-1zM243,205h1v17h-1zM244,188h1v17h-1zM245,171h1v17h-1zM246,149h1v22h-1zM247,130h1v19h-1zM248,116h1v14h-1zM249,103h1v13h-1zM250,95h1v8h-1zM251,92h1v5h-1zM252,97h1v10h-1zM253,107h1v18h-1zM254,125h1v30h-1zM255,155h1v26h-1zM256,181h1v12h-1zM257,193h1v9h-1zM258,202h1v8h-1zM259,210h1v7h-1zM260,217h1v5h-1zM261,222h1v5h-1zM262,227h1v4h-1zM263,231h1v3h-1zM264,234h1v3h-1zM265,237h1v3h-1zM266,240h1v1h-1zM267,241h1v2h-1zM268,243h1v1h-1zM269,242h1v1h-1zM270,243h1v2h-1zM271,245h1v1h-1zM272,244h1v1h-1zM273,245h1v1h-1zM274,245h1v1h-1zM275,245h1v1h-1zM276,245h1v1h-1zM277,245h1v1h-1zM278,246h1v1h-1zM279,246h1v1h-1zM280,246h1v1h-1zM281,246h1v1h-1zM282,246h1v1h-1zM283,246h1v1h-1zM284,246h1v1h-1zM285,246h1v1h-1zM286,246h1v1h-1zM287,246h1v1h-1zM288,246h1v1h-1zM289,246h1v1h-1zM290,246h1v1h-1zM291,246h1v1h-1zM292,247h1v1h-1zM293,247h1v1h-1zM294,247h1v1h-1zM295,247h1v1h-1zM296,247h1v1h-1zM297,247h1v1h-1zM298,247h1v1h-1zM299,247h1v1h-1zM300,247h1v1h-1zM301,247h1v1h-1zM302,247h1v1h-1zM303,247h1v1h-1zM304,247h1v1h-1zM305,247h1v1h-1zM306,247h1v1h-1zM307,247h1v1h-1zM308,248h1v1h-1zM309,247h1v1h-1zM310,248h1v1h-1zM311,247h1v1h-1zM312,248h1v1h-1zM313,248h1v1h-1zM314,248h1v1h-1zM315,248h1v1h-1zM316,248h1v1h-1zM317,248h1v1h-1zM318,248h1v1h-1zM319,248h1v1h-1zM320,248h1v1h-1zM321,248h1v1h-1zM322,248h1v1h-1zM323,248h1v1h-1zM324,248h1v1h-1zM325,248h1v1h-1zM326,248h1v1h-1zM327,248h1v1h-1zM328,248h1v1h-1zM329,248h1v1h-1zM330,248h1v1h-1zM331,249h1v1h-1zM332,249h1v1h-1zM333,249h1v2h-1zM334,251h1v1h-1zM335,251h1v1h-1zM336,252h1v2h-1zM337,254h1v1h-1zM338,254h1v2h-1zM339,256h1v2h-1zM340,258h1v2h-1zM341,260h1v3h-1zM342,263h1v4h-1zM343,267h1v4h-1zM344,271h1v4h-1zM345,275h1v5h-1zM346,280h1v7h-1zM347,287h1v9h-1zM348,296h1v9h-1zM349,305h1v9h-1zM350,314h1v8h-1zM351,322h1v8h-1zM352,330h1v5h-1zM353,335h1v2h-1zM354,337h1v1h-1zM355,338h1v1h-1zM356,336h1v2h-1zM357,334h1v2h-1zM358,331h1v3h-1zM359,326h1v5h-1zM360,321h1v5h-1zM361,315h1v6h-1zM362,307h1v8h-1zM363,298h1v9h-1zM364,292h1v6h-1zM365,286h1v6h-1zM366,279h1v7h-1zM367,273h1v6h-1zM368,267h1v6h-1zM369,263h1v4h-1zM370,261h1v2h-1zM371,258h1v3h-1zM372,256h1v2h-1zM373,254h1v2h-1zM374,252h1v2h-1zM375,251h1v1h-1zM376,250h1v1h-1zM377,249h1v1h-1zM378,249h1v1h-1zM379,249h1v1h-1zM380,249h1v1h-1zM381,247h1v2h-1zM382,248h1v1h-1zM383,248h1v1h-1zM384,248h1v1h-1zM385,248h1v1h-1zM386,248h1v1h-1zM387,248h1v1h-1zM388,248h1v1h-1zM389,248h1v1h-1zM390,249h1v1h-1zM391,248h1v1h-1zM392,249h1v1h-1zM393,248h1v1h-1zM394,248h1v1h-1zM395,248h1v1h-1zM396,248h1v1h-1zM397,248h1v1h-1zM398,248h1v1h-1zM399,248h1v1h-1zM400,248h1v1h-1zM401,248h1v1h-1zM402,248h1v1h-1zM403,248h1v1h-1zM404,248h1v1h-1zM405,248h1v1h-1zM406,248h1v1h-1zM407,248h1v1h-1zM408,248h1v1h-1zM409,248h1v1h-1zM410,248h1v1h-1zM411,248h1v1h-1zM412,248h1v1h-1zM413,247h1v1h-1zM414,248h1v1h-1zM415,247h1v1h-1zM416,248h1v1h-1zM417,248h1v1h-1zM418,248h1v1h-1zM419,248h1v1h-1zM420,248h1v1h-1zM421,248h1v1h-1zM422,248h1v1h-1zM423,248h1v1h-1zM424,248h1v1h-1zM425,248h1v1h-1zM426,248h1v1h-1zM427,248h1v1h-1zM428,248h1v1h-1zM429,248h1v1h-1zM430,248h1v1h-1zM431,248h1v1h-1zM432,248h1v1h-1zM433,248h1v1h-1zM434,248h1v1h-1zM435,248h1v1h-1zM436,248h1v1h-1zM437,249h1v1h-1zM438,248h1v1h-1zM439,248h1v1h-1zM440,248h1v1h-1zM441,248h1v1h-1zM442,248h1v1h-1zM443,249h1v1h-1zM444,248h1v1h-1zM445,248h1v1h-1zM446,248h1v1h-1zM447,249h1v1h-1zM448,249h1v1h-1zM449,248h1v1h-1zM450,248h1v1h-1zM451,248h1v1h-1zM452,248h1v1h-1zM453,248h1v1h-1zM454,248h1v1h-1zM455,248h1v1h-1zM456,248h1v1h-1zM457,248h1v1h-1zM458,248h1v1h-1zM459,248h1v1h-1zM460,248h1v1h-1zM461,248h1v1h-1zM462,248h1v1h-1zM463,249h1v1h-1zM464,248h1v1h-1zM465,248h1v1h-1zM466,248h1v1h-1zM467,248h1v1h-1zM468,248h1v1h-1zM469,248h1v1h-1zM470,248h1v1h-1zM471,248h1v1h-1zM472,248h1v1h-1zM473,248h1v1h-1zM474,248h1v1h-1zM475,248h1v1h-1zM476,248h1v1h-1zM477,248h1v1h-1zM478,248h1v1h-1zM479,248h1v1h-1zM480,249h1v1h-1zM481,248h1v1h-1zM482,248h1v1h-1zM483,248h1v1h-1zM484,248h1v1h-1zM485,248h1v1h-1zM486,248h1v1h-1zM487,248h1v1h-1zM488,248h1v1h-1zM489,248h1v1h-1zM490,249h1v1h-1zM491,248h1v1h-1zM492,248h1v1h-1zM493,248h1v1h-1zM494,248h1v1h-1zM495,248h1v1h-1zM496,247h1v1h-1zM497,248h1v1h-1zM498,248h1v1h-1zM499,247h1v1h-1zM500,248h1v1h-1zM501,248h1v1h-1zM502,248h1v1h-1zM503,248h1v1h-1zM504,248h1v1h-1zM505,248h1v1h-1zM506,248h1v1h-1zM507,248h1v1h-1zM508,248h1v1h-1zM509,248h1v1h-1zM510,248h1v1h-1zM511,248h1v1h-1zM512,247h1v1h-1zM513,248h1v1h-1zM514,248h1v1h-1zM515,248h1v1h-1zM516,248h1v1h-1zM517,248h1v1h-1zM518,249h1v1h-1zM519,247h1v2h-1zM520,248h1v1h-1zM521,248h1v1h-1zM522,248h1v1h-1zM523,248h1v1h-1zM524,248h1v1h-1zM525,248h1v1h-1zM526,248h1v1h-1zM527,248h1v1h-1zM528,248h1v1h-1zM529,248h1v1h-1zM530,248h1v1h-1zM531,248h1v1h-1zM532,248h1v1h-1zM533,249h1v1h-1zM534,248h1v1h-1zM535,248h1v1h-1zM536,248h1v1h-1zM537,248h1v1h-1zM538,248h1v1h-1zM539,248h1v1h-1zM540,248h1v1h-1zM541,248h1v1h-1zM542,248h1v1h-1zM543,248h1v1h-1zM544,248h1v1h-1zM545,248h1v1h-1zM546,248h1v1h-1zM547,248h1v1h-1zM548,248h1v1h-1zM549,248h1v1h-1zM550,248h1v1h-1zM551,248h1v1h-1zM552,248h1v1h-1zM553,248h1v1h-1zM554,249h1v1h-1zM555,249h1v1h-1zM556,248h1v1h-1zM557,248h1v1h-1zM558,248h1v1h-1zM559,248h1v1h-1zM560,248h1v1h-1zM561,248h1v1h-1zM562,248h1v1h-1zM563,249h1v1h-1zM564,248h1v1h-1zM565,248h1v1h-1zM566,248h1v1h-1zM567,248h1v1h-1zM568,248h1v1h-1zM569,248h1v1h-1zM570,248h1v1h-1zM571,248h1v1h-1zM572,248h1v1h-1zM573,248h1v1h-1zM574,248h1v1h-1zM575,248h1v1h-1zM576,248h1v1h-1zM577,248h1v1h-1zM578,249h1v1h-1zM579,248h1v1h-1zM580,248h1v1h-1zM581,248h1v1h-1zM582,248h1v1h-1zM583,248h1v1h-1zM584,248h1v1h-1zM585,248h1v1h-1zM586,248h1v1h-1zM587,248h1v1h-1zM588,248h1v1h-1zM589,248h1v1h-1zM590,248h1v1h-1zM591,248h1v1h-1zM592,248h1v1h-1zM593,248h1v1h-1zM594,248h1v1h-1zM595,248h1v1h-1zM596,249h1v1h-1zM597,248h1v1h-1zM598,248h1v1h-1zM599,248h1v1h-1zM600,248h1v1h-1zM601,248h1v1h-1zM602,249h1v1h-1zM603,248h1v1h-1zM604,248h1v1h-1zM605,248h1v1h-1zM606,248h1v1h-1zM607,248h1v1h-1zM608,248h1v1h-1zM609,248h1v1h-1zM610,248h1v1h-1zM611,248h1v1h-1zM612,248h1v1h-1zM613,248h1v1h-1zM614,248h1v1h-1zM615,248h1v1h-1zM616,248h1v1h-1zM617,248h1v1h-1zM618,248h1v1h-1zM619,248h1v1h-1zM620,248h1v1h-1zM621,248h1v1h-1zM622,248h1v1h-1zM623,248h1v1h-1zM624,248h1v1h-1zM625,248h1v1h-1zM626,248h1v1h-1zM627,248h1v1h-1zM628,248h1v1h-1zM629,248h1v1h-1zM630,248h1v1h-1zM631,248h1v1h-1zM632,248h1v1h-1zM633,248h1v1h-1zM634,248h1v1h-1zM635,248h1v1h-1zM636,248h1v1h-1zM637,248h1v1h-1zM638,248h1v1h-1zM639,247h1v1h-1zM640,248h1v1h-1zM641,248h1v1h-1zM642,248h1v1h-1zM643,248h1v1h-1zM644,248h1v1h-1zM645,248h1v1h-1zM646,248h1v1h-1zM647,248h1v1h-1zM648,248h1v1h-1zM649,248h1v1h-1zM650,248h1v1h-1zM651,248h1v1h-1zM652,248h1v1h-1zM653,248h1v1h-1zM654,249h1v1h-1zM655,249h1v1h-1zM656,248h1v1h-1zM657,248h1v1h-1zM658,248h1v1h-1zM659,248h1v1h-1zM660,249h1v1h-1zM661,248h1v1h-1zM662,248h1v1h-1zM663,248h1v1h-1zM664,248h1v1h-1zM665,248h1v1h-1zM666,248h1v1h-1zM667,248h1v1h-1zM668,248h1v1h-1zM669,248h1v1h-1zM670,248h1v1h-1zM671,248h1v1h-1zM672,248h1v1h-1zM673,248h1v1h-1zM674,248h1v1h-1zM675,248h1v1h-1zM676,248h1v1h-1zM677,249h1v1h-1zM678,248h1v1h-1zM679,248h1v1h-1zM680,248h1v1h-1zM681,248h1v1h-1zM682,248h1v1h-1zM683,248h1v1h-1zM684,248h1v1h-1zM685,248h1v1h-1zM686,248h1v1h-1zM687,248h1v1h-1zM688,247h1v1h-1zM689,248h1v1h-1zM690,248h1v1h-1zM691,248h1v1h-1zM692,248h1v1h-1zM693,248h1v1h-1zM694,249h1v1h-1zM695,248h1v1h-1zM696,248h1v1h-1zM697,248h1v1h-1zM698,248h1v1h-1zM699,248h1v1h-1zM700,248h1v1h-1zM701,248h1v1h-1zM702,248h1v1h-1zM703,248h1v1h-1zM704,248h1v1h-1zM705,248h1v1h-1zM706,249h1v1h-1zM707,248h1v1h-1zM708,248h1v1h-1zM709,248h1v1h-1zM710,248h1v1h-1zM711,248h1v1h-1zM712,248h1v1h-1zM713,248h1v1h-1zM714,249h1v1h-1zM715,248h1v1h-1zM716,248h1v1h-1zM717,248h1v1h-1zM718,248h1v1h-1zM719,248h1v1h-1zM720,248h1v1h-1zM721,248h1v1h-1zM722,248h1v1h-1zM723,248h1v1h-1zM724,248h1v1h-1zM725,248h1v1h-1zM726,248h1v1h-1zM727,248h1v1h-1zM728,248h1v1h-1zM729,248h1v1h-1zM730,248h1v1h-1zM731,248h1v1h-1zM732,248h1v1h-1zM733,248h1v1h-1zM734,248h1v1h-1zM735,248h1v1h-1zM736,248h1v1h-1zM737,248h1v1h-1zM738,248h1v1h-1zM739,248h1v1h-1zM740,248h1v1h-1zM741,248h1v1h-1zM742,247h1v1h-1zM743,247h1v1h-1zM744,248h1v1h-1zM745,248h1v1h-1zM746,248h1v1h-1zM747,248h1v1h-1zM748,248h1v1h-1zM749,248h1v1h-1zM750,248h1v1h-1zM751,248h1v1h-1zM752,248h1v1h-1zM753,248h1v1h-1zM754,249h1v1h-1zM755,248h1v1h-1zM756,248h1v1h-1zM757,248h1v1h-1zM758,248h1v1h-1zM759,248h1v1h-1zM760,249h1v1h-1zM761,248h1v1h-1zM762,248h1v1h-1zM763,248h1v1h-1zM764,248h1v1h-1zM765,248h1v1h-1zM766,248h1v1h-1zM767,248h1v1h-1zM768,248h1v1h-1zM769,248h1v1h-1zM770,248h1v1h-1zM771,249h1v1h-1zM772,248h1v1h-1zM773,248h1v1h-1zM774,248h1v1h-1zM775,248h1v1h-1zM776,248h1v1h-1zM777,248h1v1h-1zM778,249h1v1h-1zM779,248h1v1h-1zM780,248h1v1h-1zM781,248h1v1h-1zM782,249h1v1h-1zM783,249h1v1h-1zM784,247h1v2h-1zM785,248h1v1h-1zM786,248h1v1h-1zM787,248h1v1h-1zM788,248h1v1h-1zM789,248h1v1h-1zM790,248h1v1h-1zM791,248h1v1h-1zM792,248h1v1h-1zM793,248h1v1h-1zM794,248h1v1h-1zM795,248h1v1h-1zM796,248h1v1h-1zM797,249h1v1h-1zM798,248h1v1h-1zM799,248h1v1h-1zM800,248h1v1h-1zM801,248h1v1h-1zM802,249h1v1h-1zM803,248h1v1h-1zM804,248h1v1h-1zM805,248h1v1h-1zM806,248h1v1h-1zM807,248h1v1h-1zM808,248h1v1h-1zM809,248h1v1h-1zM810,248h1v1h-1zM811,248h1v1h-1zM812,248h1v1h-1zM813,248h1v1h-1zM814,248h1v1h-1zM815,247h1v1h-1zM816,247h1v1h-1zM817,247h1v1h-1zM818,247h1v1h-1zM819,247h1v1h-1zM820,247h1v1h-1zM821,247h1v1h-1zM822,246h1v1h-1zM823,247h1v1h-1zM824,246h1v1h-1zM825,244h1v2h-1zM826,240h1v4h-1zM827,233h1v7h-1zM828,221h1v12h-1zM829,204h1v17h-1zM830,187h1v17h-1zM831,170h1v17h-1zM832,148h1v22h-1zM833,128h1v20h-1zM834,114h1v14h-1zM835,101h1v13h-1zM836,93h1v8h-1zM837,90h1v5h-1zM838,95h1v10h-1zM839,105h1v18h-1zM840,123h1v30h-1zM841,153h1v27h-1zM842,180h1v12h-1zM843,192h1v9h-1zM844,201h1v9h-1zM845,210h1v7h-1zM846,217h1v5h-1zM847,222h1v5h-1zM848,227h1v4h-1zM849,231h1v3h-1zM850,234h1v3h-1zM851,237h1v3h-1zM852,240h1v1h-1zM853,241h1v1h-1zM854,242h1v1h-1zM855,242h1v1h-1zM856,243h1v1h-1zM857,244h1v1h-1zM858,244h1v1h-1zM859,245h1v1h-1zM860,245h1v1h-1zM861,245h1v1h-1zM862,245h1v1h-1zM863,245h1v1h-1zM864,246h1v1h-1zM865,246h1v1h-1zM866,246h1v1h-1zM867,246h1v1h-1zM868,246h1v1h-1zM869,246h1v1h-1zM870,246h1v1h-1zM871,247h1v1h-1zM872,246h1v1h-1zM873,246h1v1h-1zM874,246h1v1h-1zM875,246h1v1h-1zM876,246h1v1h-1zM877,246h1v1h-1zM878,247h1v1h-1zM879,247h1v1h-1zM880,247h1v1h-1zM881,247h1v1h-1zM882,247h1v1h-1zM883,247h1v1h-1zM884,247h1v1h-1zM885,247h1v1h-1zM886,247h1v1h-1zM887,247h1v1h-1zM888,247h1v1h-1zM889,247h1v1h-1zM890,247h1v1h-1zM891,247h1v1h-1zM892,247h1v1h-1zM893,247h1v1h-1zM894,248h1v1h-1zM895,249h1v1h-1zM896,248h1v1h-1zM897,248h1v1h-1zM898,248h1v1h-1zM899,248h1v1h-1zM900,248h1v1h-1zM901,248h1v1h-1zM902,248h1v1h-1zM903,247h1v1h-1zM904,248h1v1h-1zM905,248h1v1h-1zM906,248h1v1h-1zM907,248h1v1h-1zM908,248h1v1h-1zM909,248h1v1h-1zM910,248h1v1h-1zM911,248h1v1h-1zM912,248h1v1h-1zM913,248h1v1h-1zM914,248h1v1h-1zM915,248h1v1h-1zM916,248h1v1h-1zM917,248h1v1h-1zM918,248h1v1h-1zM919,248h1v1h-1zM920,248h1v1h-1zM921,248h1v1h-1zM922,248h1v1h-1zM923,248h1v1h-1zM924,249h1v1h-1zM925,250h1v1h-1zM926,249h1v1h-1zM927,250h1v1h-1zM928,251h1v1h-1zM929,252h1v1h-1zM930,253h1v2h-1zM931,255h1v2h-1zM932,257h1v2h-1zM933,259h1v3h-1zM934,262h1v2h-1zM935,264h1v3h-1zM936,267h1v4h-1zM937,271h1v4h-1zM938,275h1v6h-1zM939,281h1v7h-1zM940,288h1v9h-1zM941,297h1v7h-1zM942,304h1v8h-1zM943,312h1v7h-1zM944,319h1v5h-1zM945,324h1v2h-1zM946,326h1v1h-1zM947,327h1v1h-1zM948,326h1v1h-1zM949,324h1v2h-1zM950,321h1v3h-1zM951,318h1v3h-1zM952,314h1v4h-1zM953,308h1v6h-1zM954,301h1v7h-1zM955,294h1v7h-1zM956,288h1v6h-1zM957,282h1v6h-1zM958,277h1v5h-1zM959,271h1v6h-1zM960,266h1v5h-1zM961,262h1v4h-1zM962,260h1v2h-1zM963,258h1v2h-1zM964,256h1v2h-1zM965,254h1v2h-1zM966,252h1v2h-1zM967,251h1v1h-1zM968,250h1v1h-1zM969,249h1v1h-1zM970,249h1v1h-1zM971,249h1v1h-1zM972,248h1v1h-1zM973,248h1v1h-1zM974,248h1v1h-1zM975,249h1v1h-1zM976,248h1v1h-1zM977,248h1v1h-1zM978,249h1v1h-1zM979,248h1v1h-1zM980,248h1v1h-1zM981,248h1v1h-1zM982,248h1v1h-1zM983,248h1v1h-1zM984,248h1v1h-1zM985,248h1v1h-1zM986,248h1v1h-1zM987,248h1v1h-1zM988,248h1v1h-1zM989,248h1v1h-1zM990,248h1v1h-1zM991,249h1v1h-1zM992,248h1v1h-1zM993,248h1v1h-1zM994,248h1v1h-1zM995,248h1v1h-1zM996,248h1v1h-1zM997,248h1v1h-1zM998,248h1v1h-1zM999,248h1v1h-1zM1000,248h1v1h-1zM1001,248h1v1h-1zM1002,248h1v1h-1zM1003,248h1v1h-1zM1004,248h1v1h-1zM1005,248h1v1h-1zM1006,249h1v1h-1zM1007,248h1v1h-1zM1008,248h1v1h-1zM1009,248h1v1h-1zM1010,248h1v1h-1zM1011,248h1v1h-1zM1012,247h1v1h-1zM1013,248h1v1h-1zM1014,248h1v1h-1zM1015,248h1v1h-1zM1016,248h1v1h-1zM1017,248h1v1h-1zM1018,248h1v1h-1zM1019,248h1v1h-1zM1020,248h1v1h-1zM1021,248h1v1h-1zM1022,248h1v1h-1zM1023,248h1v1h-1zM1024,248h1v1h-1zM1025,248h1v1h-1zM1026,248h1v1h-1zM1027,248h1v1h-1zM1028,248h1v1h-1zM1029,247h1v1h-1zM1030,248h1v1h-1zM1031,248h1v1h-1zM1032,248h1v1h-1zM1033,248h1v1h-1zM1034,248h1v1h-1zM1035,248h1v1h-1zM1036,248h1v1h-1zM1037,248h1v1h-1zM1038,248h1v1h-1zM1039,248h1v1h-1zM1040,248h1v1h-1zM1041,248h1v1h-1zM1042,248h1v1h-1zM1043,249h1v1h-1zM1044,248h1v1h-1zM1045,248h1v1h-1zM1046,248h1v1h-1zM1047,248h1v1h-1zM1048,248h1v1h-1zM1049,248h1v1h-1zM1050,248h1v1h-1zM1051,248h1v1h-1zM1052,248h1v1h-1zM1053,248h1v1h-1zM1054,248h1v1h-1zM1055,248h1v1h-1zM1056,248h1v1h-1zM1057,248h1v1h-1zM1058,248h1v1h-1zM1059,248h1v1h-1zM1060,248h1v1h-1zM1061,248h1v1h-1zM1062,248h1v1h-1zM1063,248h1v1h-1zM1064,248h1v1h-1zM1065,248h1v1h-1z" fill="#f8f800" shape-rendering="crispEdges"/>
  <path d="M15,334h1v1h-1zM16,334h1v1h-1zM17,334h1v1h-1zM18,334h1v1h-1zM19,333h1v1h-1zM20,334h1v1h-1zM21,335h1v1h-1zM22,334h1v1h-1zM23,335h1v1h-1zM24,335h1v1h-1zM25,335h1v1h-1zM26,335h1v1h-1zM27,335h1v1h-1zM28,335h1v1h-1zM29,336h1v1h-1zM30,337h1v1h-1zM31,335h1v2h-1zM32,336h1v1h-1zM33,336h1v1h-1zM34,336h1v1h-1zM35,336h1v1h-1zM36,336h1v1h-1zM37,337h1v1h-1zM38,337h1v2h-1zM39,339h1v1h-1zM40,339h1v1h-1zM41,339h1v1h-1zM42,340h1v1h-1zM43,340h1v1h-1zM44,341h1v1h-1zM45,342h1v1h-1zM46,343h1v1h-1zM47,344h1v1h-1zM48,345h1v2h-1zM49,347h1v1h-1zM50,348h1v2h-1zM51,350h1v4h-1zM52,354h1v3h-1zM53,357h1v4h-1zM54,361h1v8h-1zM55,369h1v9h-1zM56,378h1v10h-1zM57,388h1v8h-1zM58,396h1v7h-1zM59,403h1v7h-1zM60,410h1v6h-1zM61,416h1v6h-1zM62,422h1v5h-1zM63,427h1v3h-1zM64,430h1v3h-1zM65,433h1v1h-1zM66,433h1v1h-1zM67,431h1v2h-1zM68,427h1v4h-1zM69,422h1v5h-1zM70,416h1v6h-1zM71,408h1v8h-1zM72,400h1v8h-1zM73,391h1v9h-1zM74,381h1v10h-1zM75,370h1v11h-1zM76,362h1v8h-1zM77,356h1v6h-1zM78,352h1v4h-1zM79,349h1v3h-1zM80,347h1v2h-1zM81,344h1v3h-1zM82,342h1v2h-1zM83,340h1v2h-1zM84,339h1v1h-1zM85,337h1v2h-1zM86,337h1v1h-1zM87,337h1v1h-1zM88,337h1v1h-1zM89,336h1v1h-1zM90,336h1v1h-1zM91,336h1v1h-1zM92,337h1v1h-1zM93,335h1v2h-1zM94,335h1v1h-1zM95,335h1v1h-1zM96,335h1v1h-1zM97,335h1v1h-1zM98,335h1v1h-1zM99,336h1v1h-1zM100,335h1v1h-1zM101,336h1v1h-1zM102,335h1v1h-1zM103,335h1v1h-1zM104,335h1v1h-1zM105,334h1v1h-1zM106,334h1v1h-1zM107,334h1v1h-1zM108,334h1v1h-1zM109,334h1v1h-1zM110,334h1v1h-1zM111,334h1v1h-1zM112,334h1v1h-1zM113,334h1v1h-1zM114,334h1v1h-1zM115,334h1v1h-1zM116,334h1v1h-1zM117,335h1v1h-1zM118,334h1v1h-1zM119,334h1v1h-1zM120,334h1v1h-1zM121,334h1v1h-1zM122,334h1v1h-1zM123,334h1v1h-1zM124,334h1v1h-1zM125,334h1v1h-1zM126,334h1v1h-1zM127,334h1v1h-1zM128,334h1v1h-1zM129,334h1v1h-1zM130,334h1v1h-1zM131,334h1v1h-1zM132,334h1v1h-1zM133,334h1v1h-1zM134,334h1v1h-1zM135,334h1v1h-1zM136,334h1v1h-1zM137,334h1v1h-1zM138,334h1v1h-1zM139,334h1v1h-1zM140,334h1v1h-1zM141,334h1v1h-1zM142,335h1v1h-1zM143,334h1v1h-1zM144,333h1v2h-1zM145,335h1v1h-1zM146,335h1v1h-1zM147,334h1v1h-1zM148,334h1v1h-1zM149,333h1v2h-1zM150,335h1v1h-1zM151,335h1v1h-1zM152,334h1v1h-1zM153,334h1v1h-1zM154,334h1v1h-1zM155,334h1v1h-1zM156,335h1v1h-1zM157,334h1v1h-1zM158,334h1v1h-1zM159,334h1v1h-1zM160,334h1v1h-1zM161,334h1v1h-1zM162,335h1v1h-1zM163,334h1v1h-1zM164,334h1v1h-1zM165,334h1v1h-1zM166,335h1v1h-1zM167,334h1v1h-1zM168,335h1v1h-1zM169,335h1v1h-1zM170,334h1v1h-1zM171,334h1v1h-1zM172,334h1v1h-1zM173,334h1v1h-1zM174,334h1v1h-1zM175,334h1v1h-1zM176,335h1v1h-1zM177,335h1v1h-1zM178,334h1v1h-1zM179,334h1v1h-1zM180,334h1v1h-1zM181,334h1v1h-1zM182,335h1v1h-1zM183,334h1v1h-1zM184,334h1v1h-1zM185,334h1v1h-1zM186,334h1v1h-1zM187,334h1v1h-1zM188,334h1v1h-1zM189,334h1v1h-1zM190,334h1v1h-1zM191,333h1v1h-1zM192,331h1v2h-1zM193,329h1v2h-1zM194,330h1v2h-1zM195,332h1v1h-1zM196,332h1v1h-1zM197,333h1v2h-1zM198,335h1v2h-1zM199,337h1v2h-1zM200,339h1v2h-1zM201,341h1v1h-1zM202,338h1v3h-1zM203,336h1v2h-1zM204,337h1v1h-1zM205,335h1v2h-1zM206,335h1v1h-1zM207,334h1v1h-1zM208,335h1v1h-1zM209,334h1v1h-1zM210,334h1v1h-1zM211,334h1v1h-1zM212,333h1v1h-1zM213,334h1v1h-1zM214,334h1v1h-1zM215,334h1v1h-1zM216,334h1v1h-1zM217,334h1v1h-1zM218,334h1v1h-1zM219,334h1v1h-1zM220,334h1v1h-1zM221,334h1v1h-1zM222,335h1v1h-1zM223,334h1v1h-1zM224,335h1v1h-1zM225,334h1v1h-1zM226,334h1v1h-1zM227,334h1v1h-1zM228,334h1v1h-1zM229,334h1v1h-1zM230,334h1v1h-1zM231,334h1v1h-1zM232,334h1v1h-1zM233,335h1v1h-1zM234,334h1v1h-1zM235,335h1v1h-1zM236,334h1v1h-1zM237,334h1v1h-1zM238,334h1v1h-1zM239,334h1v1h-1zM240,334h1v1h-1zM241,334h1v1h-1zM242,334h1v1h-1zM243,334h1v1h-1zM244,334h1v1h-1zM245,334h1v1h-1zM246,334h1v1h-1zM247,334h1v1h-1zM248,334h1v1h-1zM249,334h1v1h-1zM250,333h1v1h-1zM251,334h1v1h-1zM252,334h1v1h-1zM253,334h1v1h-1zM254,333h1v1h-1zM255,334h1v1h-1zM256,334h1v1h-1zM257,334h1v1h-1zM258,333h1v1h-1zM259,334h1v1h-1zM260,334h1v1h-1zM261,334h1v1h-1zM262,333h1v1h-1zM263,334h1v1h-1zM264,334h1v1h-1zM265,334h1v1h-1zM266,333h1v1h-1zM267,333h1v1h-1zM268,334h1v1h-1zM269,334h1v1h-1zM270,334h1v1h-1zM271,333h1v1h-1zM272,334h1v1h-1zM273,333h1v1h-1zM274,334h1v1h-1zM275,334h1v1h-1zM276,335h1v1h-1zM277,334h1v1h-1zM278,335h1v1h-1zM279,334h1v1h-1zM280,334h1v1h-1zM281,334h1v1h-1zM282,334h1v1h-1zM283,334h1v1h-1zM284,334h1v1h-1zM285,334h1v1h-1zM286,335h1v1h-1zM287,334h1v1h-1zM288,334h1v1h-1zM289,335h1v1h-1zM290,334h1v1h-1zM291,334h1v1h-1zM292,334h1v1h-1zM293,334h1v1h-1zM294,334h1v1h-1zM295,334h1v1h-1zM296,333h1v1h-1zM297,334h1v1h-1zM298,334h1v1h-1zM299,334h1v1h-1zM300,334h1v1h-1zM301,334h1v1h-1zM302,334h1v1h-1zM303,334h1v1h-1zM304,334h1v1h-1zM305,334h1v1h-1zM306,334h1v1h-1zM307,334h1v1h-1zM308,334h1v1h-1zM309,334h1v1h-1zM310,334h1v1h-1zM311,334h1v1h-1zM312,334h1v1h-1zM313,334h1v1h-1zM314,334h1v1h-1zM315,334h1v1h-1zM316,335h1v1h-1zM317,334h1v1h-1zM318,334h1v1h-1zM319,334h1v1h-1zM320,334h1v1h-1zM321,334h1v1h-1zM322,334h1v1h-1zM323,334h1v1h-1zM324,334h1v1h-1zM325,334h1v1h-1zM326,334h1v1h-1zM327,334h1v1h-1zM328,333h1v1h-1zM329,334h1v1h-1zM330,334h1v1h-1zM331,334h1v1h-1zM332,334h1v1h-1zM333,334h1v1h-1zM334,335h1v1h-1zM335,334h1v1h-1zM336,333h1v1h-1zM337,334h1v1h-1zM338,334h1v1h-1zM339,334h1v1h-1zM340,335h1v1h-1zM341,334h1v1h-1zM342,334h1v1h-1zM343,334h1v1h-1zM344,334h1v1h-1zM345,334h1v1h-1zM346,334h1v1h-1zM347,334h1v1h-1zM348,334h1v1h-1zM349,334h1v1h-1zM350,334h1v1h-1zM351,334h1v1h-1zM352,334h1v1h-1zM353,334h1v1h-1zM354,333h1v1h-1zM355,334h1v1h-1zM356,334h1v1h-1zM357,335h1v1h-1zM358,334h1v1h-1zM359,334h1v1h-1zM360,335h1v1h-1zM361,334h1v1h-1zM362,334h1v1h-1zM363,334h1v1h-1zM364,334h1v1h-1zM365,334h1v1h-1zM366,334h1v1h-1zM367,334h1v1h-1zM368,334h1v1h-1zM369,334h1v1h-1zM370,334h1v1h-1zM371,334h1v1h-1zM372,334h1v1h-1zM373,334h1v1h-1zM374,333h1v1h-1zM375,334h1v1h-1zM376,334h1v1h-1zM377,334h1v1h-1zM378,334h1v1h-1zM379,334h1v1h-1zM380,334h1v1h-1zM381,334h1v1h-1zM382,334h1v1h-1zM383,334h1v1h-1zM384,334h1v1h-1zM385,334h1v1h-1zM386,334h1v1h-1zM387,334h1v1h-1zM388,334h1v1h-1zM389,333h1v1h-1zM390,334h1v1h-1zM391,334h1v1h-1zM392,334h1v1h-1zM393,334h1v1h-1zM394,334h1v1h-1zM395,334h1v1h-1zM396,334h1v1h-1zM397,333h1v2h-1zM398,335h1v1h-1zM399,334h1v1h-1zM400,334h1v1h-1zM401,334h1v1h-1zM402,334h1v1h-1zM403,334h1v1h-1zM404,334h1v1h-1zM405,334h1v1h-1zM406,334h1v1h-1zM407,334h1v1h-1zM408,334h1v1h-1zM409,334h1v1h-1zM410,335h1v1h-1zM411,334h1v1h-1zM412,334h1v1h-1zM413,334h1v1h-1zM414,333h1v1h-1zM415,334h1v1h-1zM416,334h1v1h-1zM417,335h1v1h-1zM418,335h1v1h-1zM419,334h1v1h-1zM420,334h1v1h-1zM421,334h1v1h-1zM422,335h1v1h-1zM423,333h1v2h-1zM424,334h1v1h-1zM425,334h1v1h-1zM426,334h1v1h-1zM427,333h1v1h-1zM428,334h1v1h-1zM429,334h1v1h-1zM430,333h1v1h-1zM431,334h1v1h-1zM432,334h1v1h-1zM433,334h1v1h-1zM434,334h1v1h-1zM435,334h1v1h-1zM436,334h1v1h-1zM437,334h1v1h-1zM438,334h1v1h-1zM439,334h1v1h-1zM440,334h1v1h-1zM441,334h1v1h-1zM442,334h1v1h-1zM443,334h1v1h-1zM444,334h1v1h-1zM445,334h1v1h-1zM446,334h1v1h-1zM447,333h1v1h-1zM448,334h1v1h-1zM449,335h1v1h-1zM450,334h1v1h-1zM451,333h1v1h-1zM452,334h1v1h-1zM453,334h1v1h-1zM454,334h1v1h-1zM455,334h1v1h-1zM456,335h1v1h-1zM457,334h1v1h-1zM458,334h1v1h-1zM459,334h1v1h-1zM460,334h1v1h-1zM461,334h1v1h-1zM462,334h1v1h-1zM463,334h1v1h-1zM464,334h1v1h-1zM465,335h1v1h-1zM466,334h1v1h-1zM467,334h1v1h-1zM468,335h1v1h-1zM469,334h1v1h-1zM470,334h1v1h-1zM471,334h1v1h-1zM472,334h1v1h-1zM473,334h1v1h-1zM474,334h1v1h-1zM475,334h1v1h-1zM476,334h1v1h-1zM477,335h1v1h-1zM478,334h1v1h-1zM479,334h1v1h-1zM480,334h1v1h-1zM481,334h1v1h-1zM482,334h1v1h-1zM483,334h1v1h-1zM484,334h1v1h-1zM485,334h1v1h-1zM486,334h1v1h-1zM487,334h1v1h-1zM488,334h1v1h-1zM489,334h1v1h-1zM490,334h1v1h-1zM491,334h1v1h-1zM492,334h1v1h-1zM493,334h1v1h-1zM494,334h1v1h-1zM495,334h1v1h-1zM496,334h1v1h-1zM497,334h1v1h-1zM498,334h1v1h-1zM499,334h1v1h-1zM500,334h1v1h-1zM501,334h1v1h-1zM502,334h1v1h-1zM503,334h1v1h-1zM504,334h1v1h-1zM505,334h1v1h-1zM506,335h1v1h-1zM507,334h1v1h-1zM508,334h1v1h-1zM509,334h1v1h-1zM510,335h1v1h-1zM511,334h1v1h-1zM512,335h1v1h-1zM513,333h1v2h-1zM514,334h1v1h-1zM515,334h1v1h-1zM516,334h1v1h-1zM517,334h1v1h-1zM518,334h1v1h-1zM519,334h1v1h-1zM520,334h1v1h-1zM521,334h1v1h-1zM522,334h1v1h-1zM523,334h1v1h-1zM524,334h1v1h-1zM525,334h1v1h-1zM526,334h1v1h-1zM527,334h1v1h-1zM528,334h1v1h-1zM529,334h1v2h-1zM530,332h1v2h-1zM531,330h1v3h-1zM532,324h1v6h-1zM533,309h1v15h-1zM534,288h1v21h-1zM535,271h1v17h-1zM536,255h1v16h-1zM537,236h1v19h-1zM538,206h1v30h-1zM539,176h1v30h-1zM540,159h1v17h-1zM541,151h1v8h-1zM542,148h1v5h-1zM543,153h1v25h-1zM544,178h1v34h-1zM545,212h1v28h-1zM546,240h1v23h-1zM547,263h1v16h-1zM548,279h1v13h-1zM549,292h1v9h-1zM550,301h1v5h-1zM551,306h1v5h-1zM552,311h1v3h-1zM553,314h1v4h-1zM554,318h1v3h-1zM555,321h1v2h-1zM556,323h1v2h-1zM557,325h1v2h-1zM558,327h1v1h-1zM559,328h1v1h-1zM560,329h1v1h-1zM561,330h1v1h-1zM562,330h1v1h-1zM563,331h1v1h-1zM564,330h1v2h-1zM565,332h1v2h-1zM566,333h1v1h-1zM567,332h1v1h-1zM568,332h1v1h-1zM569,333h1v1h-1zM570,334h1v1h-1zM571,333h1v1h-1zM572,332h1v2h-1zM573,334h1v1h-1zM574,333h1v1h-1zM575,334h1v1h-1zM576,334h1v1h-1zM577,333h1v2h-1zM578,335h1v1h-1zM579,334h1v1h-1zM580,334h1v1h-1zM581,334h1v1h-1zM582,334h1v1h-1zM583,335h1v1h-1zM584,334h1v1h-1zM585,334h1v1h-1zM586,334h1v1h-1zM587,334h1v1h-1zM588,334h1v1h-1zM589,334h1v1h-1zM590,334h1v1h-1zM591,335h1v1h-1zM592,335h1v1h-1zM593,334h1v1h-1zM594,334h1v1h-1zM595,335h1v1h-1zM596,334h1v1h-1zM597,334h1v1h-1zM598,333h1v1h-1zM599,334h1v1h-1zM600,334h1v1h-1zM601,335h1v1h-1zM602,334h1v1h-1zM603,334h1v1h-1zM604,334h1v1h-1zM605,334h1v1h-1zM606,334h1v1h-1zM607,335h1v1h-1zM608,335h1v1h-1zM609,335h1v1h-1zM610,335h1v1h-1zM611,335h1v1h-1zM612,335h1v1h-1zM613,336h1v1h-1zM614,336h1v1h-1zM615,336h1v1h-1zM616,336h1v1h-1zM617,336h1v1h-1zM618,337h1v1h-1zM619,337h1v1h-1zM620,337h1v1h-1zM621,338h1v1h-1zM622,338h1v1h-1zM623,338h1v1h-1zM624,339h1v1h-1zM625,340h1v1h-1zM626,340h1v1h-1zM627,341h1v2h-1zM628,343h1v1h-1zM629,344h1v1h-1zM630,345h1v1h-1zM631,346h1v1h-1zM632,347h1v2h-1zM633,349h1v2h-1zM634,351h1v4h-1zM635,355h1v4h-1zM636,359h1v5h-1zM637,364h1v8h-1zM638,372h1v10h-1zM639,382h1v9h-1zM640,391h1v8h-1zM641,399h1v8h-1zM642,407h1v6h-1zM643,413h1v6h-1zM644,419h1v5h-1zM645,424h1v5h-1zM646,429h1v3h-1zM647,432h1v3h-1zM648,435h1v1h-1zM649,434h1v1h-1zM650,431h1v3h-1zM651,427h1v4h-1zM652,421h1v6h-1zM653,414h1v7h-1zM654,406h1v8h-1zM655,398h1v8h-1zM656,388h1v10h-1zM657,377h1v11h-1zM658,367h1v10h-1zM659,360h1v7h-1zM660,356h1v4h-1zM661,352h1v4h-1zM662,348h1v4h-1zM663,346h1v2h-1zM664,344h1v2h-1zM665,342h1v2h-1zM666,340h1v2h-1zM667,339h1v1h-1zM668,339h1v1h-1zM669,337h1v2h-1zM670,337h1v1h-1zM671,336h1v1h-1zM672,336h1v1h-1zM673,336h1v1h-1zM674,336h1v1h-1zM675,335h1v1h-1zM676,335h1v1h-1zM677,335h1v1h-1zM678,334h1v1h-1zM679,335h1v1h-1zM680,334h1v1h-1zM681,335h1v1h-1zM682,335h1v1h-1zM683,335h1v1h-1zM684,335h1v1h-1zM685,335h1v1h-1zM686,334h1v2h-1zM687,336h1v1h-1zM688,334h1v2h-1zM689,334h1v1h-1zM690,335h1v1h-1zM691,334h1v1h-1zM692,334h1v1h-1zM693,333h1v1h-1zM694,334h1v1h-1zM695,334h1v1h-1zM696,334h1v1h-1zM697,335h1v1h-1zM698,335h1v1h-1zM699,334h1v1h-1zM700,334h1v1h-1zM701,334h1v1h-1zM702,334h1v1h-1zM703,334h1v1h-1zM704,334h1v1h-1zM705,334h1v1h-1zM706,334h1v1h-1zM707,334h1v1h-1zM708,334h1v1h-1zM709,334h1v1h-1zM710,334h1v1h-1zM711,335h1v1h-1zM712,334h1v1h-1zM713,333h1v2h-1zM714,335h1v1h-1zM715,335h1v1h-1zM716,334h1v1h-1zM717,334h1v1h-1zM718,334h1v1h-1zM719,334h1v1h-1zM720,334h1v1h-1zM721,335h1v1h-1zM722,334h1v1h-1zM723,334h1v1h-1zM724,335h1v1h-1zM725,334h1v1h-1zM726,334h1v1h-1zM727,334h1v1h-1zM728,334h1v1h-1zM729,334h1v1h-1zM730,334h1v1h-1zM731,334h1v1h-1zM732,334h1v1h-1zM733,333h1v1h-1zM734,334h1v1h-1zM735,334h1v1h-1zM736,334h1v1h-1zM737,335h1v1h-1zM738,334h1v1h-1zM739,334h1v1h-1zM740,334h1v1h-1zM741,334h1v1h-1zM742,334h1v1h-1zM743,335h1v1h-1zM744,334h1v1h-1zM745,334h1v1h-1zM746,334h1v1h-1zM747,334h1v1h-1zM748,335h1v1h-1zM749,333h1v2h-1zM750,334h1v1h-1zM751,334h1v1h-1zM752,334h1v1h-1zM753,334h1v1h-1zM754,334h1v1h-1zM755,334h1v1h-1zM756,335h1v1h-1zM757,334h1v1h-1zM758,334h1v1h-1zM759,333h1v1h-1zM760,334h1v1h-1zM761,333h1v1h-1zM762,334h1v1h-1zM763,333h1v1h-1zM764,334h1v1h-1zM765,335h1v1h-1zM766,334h1v1h-1zM767,334h1v1h-1zM768,335h1v1h-1zM769,334h1v1h-1zM770,334h1v1h-1zM771,334h1v1h-1zM772,334h1v1h-1zM773,334h1v1h-1zM774,333h1v1h-1zM775,334h1v1h-1zM776,334h1v2h-1zM777,332h1v2h-1zM778,330h1v2h-1zM779,330h1v1h-1zM780,331h1v1h-1zM781,332h1v1h-1zM782,333h1v1h-1zM783,334h1v2h-1zM784,336h1v1h-1zM785,337h1v2h-1zM786,339h1v1h-1zM787,339h1v2h-1zM788,337h1v2h-1zM789,336h1v1h-1zM790,334h1v2h-1zM791,335h1v1h-1zM792,334h1v1h-1zM793,334h1v1h-1zM794,333h1v1h-1zM795,334h1v1h-1zM796,334h1v1h-1zM797,334h1v1h-1zM798,333h1v1h-1zM799,334h1v1h-1zM800,334h1v1h-1zM801,334h1v1h-1zM802,335h1v1h-1zM803,334h1v1h-1zM804,335h1v1h-1zM805,334h1v1h-1zM806,334h1v1h-1zM807,334h1v1h-1zM808,334h1v1h-1zM809,334h1v1h-1zM810,334h1v1h-1zM811,334h1v1h-1zM812,334h1v1h-1zM813,334h1v1h-1zM814,334h1v1h-1zM815,334h1v1h-1zM816,335h1v1h-1zM817,334h1v1h-1zM818,334h1v1h-1zM819,335h1v1h-1zM820,334h1v1h-1zM821,334h1v1h-1zM822,334h1v1h-1zM823,335h1v1h-1zM824,334h1v1h-1zM825,334h1v1h-1zM826,333h1v2h-1zM827,335h1v1h-1zM828,334h1v1h-1zM829,334h1v1h-1zM830,333h1v1h-1zM831,334h1v1h-1zM832,334h1v1h-1zM833,334h1v1h-1zM834,334h1v1h-1zM835,333h1v1h-1zM836,333h1v1h-1zM837,334h1v1h-1zM838,334h1v1h-1zM839,334h1v1h-1zM840,335h1v1h-1zM841,335h1v1h-1zM842,334h1v1h-1zM843,334h1v1h-1zM844,334h1v1h-1zM845,334h1v1h-1zM846,334h1v1h-1zM847,334h1v1h-1zM848,334h1v1h-1zM849,334h1v1h-1zM850,334h1v1h-1zM851,335h1v1h-1zM852,334h1v1h-1zM853,334h1v1h-1zM854,334h1v1h-1zM855,335h1v1h-1zM856,334h1v1h-1zM857,334h1v1h-1zM858,334h1v1h-1zM859,334h1v1h-1zM860,334h1v1h-1zM861,335h1v1h-1zM862,334h1v1h-1zM863,334h1v1h-1zM864,334h1v1h-1zM865,334h1v1h-1zM866,333h1v1h-1zM867,334h1v1h-1zM868,334h1v1h-1zM869,333h1v1h-1zM870,334h1v1h-1zM871,334h1v1h-1zM872,335h1v1h-1zM873,334h1v1h-1zM874,334h1v1h-1zM875,334h1v1h-1zM876,333h1v1h-1zM877,334h1v1h-1zM878,334h1v1h-1zM879,334h1v1h-1zM880,334h1v1h-1zM881,334h1v1h-1zM882,334h1v1h-1zM883,334h1v1h-1zM884,335h1v1h-1zM885,334h1v1h-1zM886,334h1v1h-1zM887,334h1v1h-1zM888,334h1v1h-1zM889,334h1v1h-1zM890,334h1v1h-1zM891,335h1v1h-1zM892,334h1v1h-1zM893,334h1v1h-1zM894,333h1v2h-1zM895,335h1v1h-1zM896,334h1v1h-1zM897,334h1v1h-1zM898,335h1v1h-1zM899,335h1v1h-1zM900,334h1v1h-1zM901,334h1v1h-1zM902,335h1v1h-1zM903,334h1v1h-1zM904,334h1v1h-1zM905,334h1v1h-1zM906,334h1v1h-1zM907,335h1v1h-1zM908,334h1v1h-1zM909,334h1v1h-1zM910,335h1v1h-1zM911,333h1v2h-1zM912,334h1v1h-1zM913,334h1v1h-1zM914,334h1v1h-1zM915,333h1v1h-1zM916,334h1v1h-1zM917,333h1v1h-1zM918,334h1v1h-1zM919,334h1v1h-1zM920,333h1v1h-1zM921,334h1v1h-1zM922,334h1v1h-1zM923,333h1v1h-1zM924,334h1v1h-1zM925,334h1v1h-1zM926,334h1v1h-1zM927,334h1v1h-1zM928,334h1v1h-1zM929,334h1v1h-1zM930,334h1v1h-1zM931,334h1v1h-1zM932,334h1v1h-1zM933,334h1v1h-1zM934,334h1v1h-1zM935,334h1v1h-1zM936,334h1v1h-1zM937,334h1v1h-1zM938,334h1v1h-1zM939,334h1v1h-1zM940,334h1v1h-1zM941,334h1v1h-1zM942,335h1v1h-1zM943,334h1v1h-1zM944,334h1v1h-1zM945,334h1v1h-1zM946,334h1v1h-1zM947,334h1v1h-1zM948,334h1v1h-1zM949,334h1v1h-1zM950,334h1v1h-1zM951,335h1v1h-1zM952,334h1v1h-1zM953,334h1v1h-1zM954,335h1v1h-1zM955,333h1v2h-1zM956,334h1v1h-1zM957,334h1v1h-1zM958,334h1v1h-1zM959,334h1v1h-1zM960,334h1v1h-1zM961,334h1v1h-1zM962,334h1v1h-1zM963,335h1v1h-1zM964,334h1v1h-1zM965,334h1v1h-1zM966,334h1v1h-1zM967,334h1v1h-1zM968,334h1v1h-1zM969,334h1v1h-1zM970,334h1v1h-1zM971,334h1v1h-1zM972,334h1v1h-1zM973,334h1v1h-1zM974,334h1v1h-1zM975,334h1v1h-1zM976,334h1v1h-1zM977,334h1v1h-1zM978,333h1v1h-1zM979,334h1v1h-1zM980,334h1v1h-1zM981,334h1v1h-1zM982,334h1v1h-1zM983,334h1v1h-1zM984,334h1v1h-1zM985,333h1v1h-1zM986,333h1v1h-1zM987,333h1v1h-1zM988,334h1v1h-1zM989,334h1v1h-1zM990,334h1v1h-1zM991,334h1v1h-1zM992,335h1v1h-1zM993,334h1v1h-1zM994,334h1v1h-1zM995,334h1v1h-1zM996,334h1v1h-1zM997,334h1v1h-1zM998,334h1v1h-1zM999,334h1v1h-1zM1000,334h1v1h-1zM1001,334h1v1h-1zM1002,334h1v1h-1zM1003,334h1v1h-1zM1004,334h1v1h-1zM1005,334h1v1h-1zM1006,334h1v1h-1zM1007,334h1v1h-1zM1008,334h1v1h-1zM1009,334h1v1h-1zM1010,335h1v1h-1zM1011,334h1v1h-1zM1012,334h1v1h-1zM1013,334h1v1h-1zM1014,334h1v1h-1zM1015,334h1v1h-1zM1016,334h1v1h-1zM1017,334h1v1h-1zM1018,334h1v1h-1zM1019,334h1v1h-1zM1020,333h1v2h-1zM1021,335h1v1h-1zM1022,334h1v1h-1zM1023,334h1v1h-1zM1024,335h1v1h-1zM1025,334h1v1h-1zM1026,334h1v1h-1zM1027,334h1v1h-1zM1028,335h1v1h-1zM1029,334h1v1h-1zM1030,334h1v1h-1zM1031,334h1v1h-1zM1032,333h1v1h-1zM1033,334h1v1h-1zM1034,334h1v1h-1zM1035,334h1v1h-1zM1036,334h1v1h-1zM1037,334h1v1h-1zM1038,334h1v1h-1zM1039,334h1v1h-1zM1040,334h1v1h-1zM1041,334h1v1h-1zM1042,334h1v1h-1zM1043,334h1v1h-1zM1044,334h1v1h-1zM1045,334h1v1h-1zM1046,334h1v1h-1zM1047,333h1v1h-1zM1048,334h1v1h-1zM1049,335h1v1h-1zM1050,334h1v1h-1zM1051,334h1v1h-1zM1052,334h1v1h-1zM1053,334h1v1h-1zM1054,334h1v1h-1zM1055,334h1v1h-1zM1056,334h1v1h-1zM1057,334h1v1h-1zM1058,334h1v1h-1zM1059,334h1v1h-1zM1060,334h1v1h-1zM1061,334h1v1h-1zM1062,334h1v1h-1zM1063,334h1v1h-1zM1064,334h1v1h-1zM1065,334h1v1h-1z" fill="#00cccc" shape-rendering="crispEdges"/>
  <!-- channel markers -->
  <path d="M2,99 H10 L13,102.5 L10,106 H2 Z" fill="#ffff00"/>
  <path d="M7.4,99.8 h1.6 v6.2 h-1.6z M5.8,101.6 L7.4,99.8 V101.4 L6.6,102.3 Z" fill="#000"/>
  <path d="M2,177 H10 L13,180.5 L10,184 H2 Z" fill="#00ffff"/>
  <path d="M6,179 Q7.5,177.3 9,179 Q9,180.5 6,183.5 H9.5" fill="none" stroke="#000" stroke-width="1"/>
  <path d="M1078,177 H1071 L1068,181 L1071,185 H1078 Z" fill="#00ffff"/>
  <path d="M1072,179.5 H1077 M1074.5,179.5 V184" fill="none" stroke="#004050" stroke-width="1"/>
  <!-- bottom info -->
  <rect x="14" y="623" width="58" height="12" fill="#000"/>
  <rect x="15" y="624.5" width="17" height="9.5" fill="#ffff00"/>
  <text x="15.3" y="631.4" font-family="Liberation Sans" font-size="8" fill="#2a2a00">CH1</text>
  <path d="M33.5,630 Q35,626 36.5,629 Q38,632 39.5,628" fill="none" stroke="#e8e800" stroke-width="0.9"/>
  <text x="45.8" y="631.2" font-family="Liberation Sans" font-size="7.4" fill="#e0e000">1.00V</text>
  <rect x="83" y="623" width="57.5" height="12" fill="#000"/>
  <text x="84.8" y="631.4" font-family="Liberation Sans" font-size="7.8" fill="#00c8d8">CH2</text>
  <path d="M102,628.5 H108 M102,631.5 H103.3 M104.4,631.5 H105.7 M106.8,631.5 H108" fill="none" stroke="#00c8d8" stroke-width="0.9"/>
  <text x="114.6" y="631.2" font-family="Liberation Sans" font-size="7.4" fill="#00d0e0">1.00V</text>
  <rect x="1" y="637" width="1078" height="1" fill="#f8f8f8"/>
</svg>

<!-- right panel -->
<div id="panel" class="a"></div>
<svg class="a" style="left:1080px;top:53px" width="120" height="585" viewBox="1080 53 120 585">
  <defs>
    <g id="chev"><path d="M0,0 L3,3 L6,0" fill="none" stroke="#333" stroke-width="0.9"/></g>
    <g id="chevd"><path d="M0,0 L3,3 L6,0" fill="none" stroke="#aaa" stroke-width="0.9"/></g>
  </defs>
  <rect x="1080" y="54" width="120" height="1" fill="#e8e8e8"/><rect x="1081" y="54" width="1" height="584" fill="#e8e8e8"/>
  <!-- group boxes -->
  <g fill="none" stroke="#dcdcdc" stroke-width="1">
    <rect x="1084.5" y="61.5" width="104" height="69"/>
    <rect x="1084.5" y="139.5" width="104" height="78"/>
    <rect x="1084.5" y="227.5" width="104" height="126"/>
    <rect x="1084.5" y="363.5" width="104" height="73"/>
    <rect x="1084.5" y="445.5" width="104" height="118"/>
  </g>
  <g font-family="Liberation Sans" font-size="7" fill="#101828">
    <rect x="1088" y="58" width="34" height="7" fill="#f0f0f0"/>
    <text x="1089" y="64.5" fill="#1c2458">Horizontal</text>
    <text x="1086" y="77">Time / DIV</text>
    <text x="1086" y="106">Format</text>
    <rect x="1088" y="136" width="26" height="7" fill="#f0f0f0"/>
    <text x="1089" y="141.5" fill="#1c2458">Vertical</text>
    <rect x="1088" y="224" width="25" height="7" fill="#f0f0f0"/>
    <text x="1089" y="230" fill="#1c2458">Trigger</text>
    <text x="1086" y="247">Trigger Mode</text>
    <text x="1086" y="266">Trigger Sweep</text>
    <text x="1086" y="284">Trigger Source</text>
    <text x="1086" y="302">Trigger Slope</text>
    <rect x="1088" y="360" width="54" height="7" fill="#f0f0f0"/>
    <text x="1089" y="366" fill="#1c2458">Move Waveform</text>
    <text x="1085" y="382" fill="#a0a0a0">Length :</text>
    <text x="1085" y="400" fill="#a0a0a0">Step</text>
    <rect x="1088" y="442" width="30" height="7" fill="#f0f0f0"/>
    <text x="1089" y="448">Recorder</text>
    <text x="1089" y="463">Path :</text>
    <text x="1099" y="497" fill="#8a8a8a">Storage</text>
    <text x="1147" y="497" fill="#8a8a8a">Play Back</text>
    <text x="1093" y="523">Interval(S)</text>
  </g>
  <!-- combos -->
  <g>
    <rect x="1085.5" y="82.5" width="42" height="13" fill="#e5e5e5" stroke="#c6c6c6"/>
    <text x="1088" y="92" font-family="Liberation Sans" font-size="7" fill="#111">50.00ms</text>
    <use href="#chev" x="1118" y="88"/>
    <rect x="1085.5" y="112.5" width="42" height="13" fill="#e5e5e5" stroke="#c6c6c6"/>
    <text x="1088" y="122" font-family="Liberation Sans" font-size="7" fill="#111">Y - T</text>
    <use href="#chev" x="1118" y="118"/>

    <rect x="1085.5" y="149.5" width="42" height="13" fill="#e5e5e5" stroke="#c6c6c6"/>
    <text x="1088" y="159" font-family="Liberation Sans" font-size="7" fill="#111">CH1</text>
    <use href="#chev" x="1118" y="155"/>
    <rect x="1085.5" y="167.5" width="42" height="12" fill="#fff" stroke="#c6c6c6"/>
    <rect x="1117.5" y="167.5" width="10" height="12" fill="#f0f0f0" stroke="#c6c6c6"/>
    <path d="M1120.5,172 L1122.5,170 L1124.5,172 Z M1120.5,175 L1122.5,177 L1124.5,175 Z" fill="#333"/>
    <text x="1089" y="176.5" font-family="Liberation Sans" font-size="7" fill="#111">1.00V</text>
    <rect x="1085.5" y="184.5" width="42" height="13" fill="#cccccc" stroke="#cccccc"/>
    <text x="1088" y="194" font-family="Liberation Sans" font-size="7" fill="#9a9a9a">AC</text>
    <use href="#chevd" x="1118" y="190"/>
    <rect x="1085.5" y="201.5" width="42" height="13" fill="#e5e5e5" stroke="#c6c6c6"/>
    <text x="1088" y="211" font-family="Liberation Sans" font-size="7" fill="#111">x1</text>
    <use href="#chev" x="1118" y="207"/>

    <rect x="1140.5" y="237.5" width="42" height="13" fill="#e5e5e5" stroke="#c6c6c6"/>
    <text x="1142" y="247" font-family="Liberation Sans" font-size="7" fill="#111">Edge</text>
    <use href="#chev" x="1173" y="243"/>
    <rect x="1140.5" y="256.5" width="42" height="13" fill="#e5e5e5" stroke="#c6c6c6"/>
    <text x="1142" y="266" font-family="Liberation Sans" font-size="7" fill="#111">AUTO</text>
    <use href="#chev" x="1173" y="262"/>
    <rect x="1140.5" y="274.5" width="42" height="13" fill="#e5e5e5" stroke="#c6c6c6"/>
    <text x="1142" y="284" font-family="Liberation Sans" font-size="7" fill="#111">CH2</text>
    <use href="#chev" x="1173" y="280"/>
    <rect x="1140.5" y="293.5" width="42" height="13" fill="#e5e5e5" stroke="#c6c6c6"/>
    <text x="1142" y="303" font-family="Liberation Sans" font-size="7" fill="#111">+</text>
    <use href="#chev" x="1173" y="299"/>
  </g>
  <!-- checkbox -->
  <rect x="1140.5" y="152.5" width="7" height="7" fill="#fff" stroke="#333"/>
  <path d="M1141.5,156 L1143.5,158 L1146.5,153.5" fill="none" stroke="#222" stroke-width="0.9"/>
  <text x="1150" y="159" font-family="Liberation Sans" font-size="7" fill="#111">ON/OFF</text>
  <!-- knobs -->
  <g>
    <ellipse cx="1157.7" cy="102" rx="23.3" ry="22.2" fill="#f6f6f6" stroke="#2a2a2a" stroke-width="0.7"/>
    <ellipse cx="1157.7" cy="102" rx="21.6" ry="20.8" fill="#c8c8c8" stroke="#2a2a2a" stroke-width="0.7"/>
    <path d="M1179.2,98 h2.2 v8 h-2.2z" fill="#b8b8b8"/>
    <path d="M1151,123.3 Q1157.7,125.2 1164.4,123.3" fill="none" stroke="#222" stroke-width="1.2"/>
    <circle cx="1157.7" cy="102.5" r="17.6" fill="#0000cc" stroke="#1a1a1a" stroke-width="0.6"/>
    <path d="M1138,121.6 L1144,116.5 M1177.5,121.6 L1171.5,116.5" stroke="#222" stroke-width="1"/>
    <path d="M1153.3,88 L1157,99.6" stroke="#f4f0c8" stroke-width="1.1"/>
  </g>
  <g>
    <ellipse cx="1157.7" cy="191" rx="23.3" ry="22.2" fill="#f6f6f6" stroke="#2a2a2a" stroke-width="0.7"/>
    <ellipse cx="1157.7" cy="191" rx="21.6" ry="20.8" fill="#c8c8c8" stroke="#2a2a2a" stroke-width="0.7"/>
    <path d="M1179.2,187 h2.2 v8 h-2.2z" fill="#b8b8b8"/>
    <path d="M1151,212.3 Q1157.7,214.2 1164.4,212.3" fill="none" stroke="#222" stroke-width="1.2"/>
    <circle cx="1157.7" cy="191.5" r="17.6" fill="#ffff00" stroke="#1a1a1a" stroke-width="0.6"/>
    <path d="M1138,210.6 L1144,205.5 M1177.5,210.6 L1171.5,205.5" stroke="#222" stroke-width="1"/>
    <path d="M1144.3,185.5 L1154,189.6" stroke="#f4f0c8" stroke-width="1.1"/>
  </g>
  <!-- move waveform -->
  <rect x="1142.5" y="372.5" width="42" height="12" fill="#f0f0f0" stroke="#dadada"/>
  <text x="1155" y="381" font-family="Liberation Sans" font-size="7" fill="#a8a8a8">1765</text>
  <rect x="1142.5" y="392.5" width="42" height="13" fill="#f4f4f4" stroke="#c8c8c8"/>
  <rect x="1174.5" y="392.5" width="10" height="13" fill="#f0f0f0" stroke="#c8c8c8"/>
  <path d="M1177.5,397.5 L1179.5,395.5 L1181.5,397.5 Z M1177.5,400.5 L1179.5,402.5 L1181.5,400.5 Z" fill="#444"/>
  <text x="1151" y="402" font-family="Liberation Sans" font-size="7" fill="#888">1000</text>
  <rect x="1091" y="416" width="16.5" height="12" fill="#cfcfcf"/>
  <text x="1096" y="425" font-family="Liberation Sans" font-size="7" fill="#9a9a9a">|&lt;</text>
  <rect x="1110.5" y="416.5" width="51" height="12" fill="#f4f4f4" stroke="#c8c8c8"/>
  <rect x="1151.5" y="416.5" width="10" height="12" fill="#f0f0f0" stroke="#c8c8c8"/>
  <path d="M1154.5,421 L1156.5,419 L1158.5,421 Z M1154.5,424 L1156.5,426 L1158.5,424 Z" fill="#444"/>
  <text x="1124" y="425.5" font-family="Liberation Sans" font-size="7" fill="#888">892</text>
  <rect x="1164" y="416" width="16.5" height="12" fill="#cfcfcf"/>
  <text x="1169" y="425" font-family="Liberation Sans" font-size="7" fill="#9a9a9a">&gt;|</text>
  <!-- recorder -->
  <rect x="1085.5" y="466.5" width="88" height="12" fill="#f8f8f8" stroke="#dcdcdc"/>
  <text x="1087.5" y="475" font-family="Liberation Sans" font-size="7" fill="#888">C:\Users\Angel\Desktop\Ha</text>
  <rect x="1173.5" y="466" width="14" height="13" fill="#d6d6d6"/>
  <text x="1177" y="475" font-family="Liberation Sans" font-size="7" fill="#aaa">...</text>
  <circle cx="1093.5" cy="494" r="3.8" fill="#f0f0f0" stroke="#c8c8c8" stroke-width="0.9"/>
  <circle cx="1093.5" cy="494" r="2" fill="#bcbcbc"/>
  <circle cx="1141.5" cy="494" r="3.8" fill="#fff" stroke="#555" stroke-width="0.9"/>
  <rect x="1134" y="512" width="50.5" height="13.5" fill="#cccccc"/>
  <text x="1136" y="522" font-family="Liberation Sans" font-size="7" fill="#9a9a9a">Fastest</text>
  <use href="#chevd" x="1174" y="517"/>
  <rect x="1092" y="535" width="36" height="15" fill="#cccccc"/>
  <text x="1102" y="545.5" font-family="Liberation Sans" font-size="7" fill="#9a9a9a">Start</text>
  <rect x="1144.5" y="535.5" width="36" height="14" fill="#e1e1e1" stroke="#adadad"/>
  <text x="1156" y="545.5" font-family="Liberation Sans" font-size="7" fill="#111">Stop</text>
</svg>


<!-- status bar -->
<div id="status" class="a">
  <div class="t" style="left:2px;top:2px;letter-spacing:-0.05px;color:#101030">Connected</div>
  <div class="t" style="left:100px;top:2px;letter-spacing:-0.05px;color:#101030">Freq: 0.000Hz</div>
  <div class="t" style="left:199px;top:2px;letter-spacing:-0.05px;color:#101030">Time: 0.00nS</div>
  <div class="t" style="left:297px;top:2px;letter-spacing:-0.05px;color:#101030">Volt: 0.00uV</div>
  <div class="a" style="left:1132px;top:0;width:1px;height:11px;background:#dadada"></div>
  <div class="t" style="left:1135px;top:2px;letter-spacing:-0.3px;color:#101030">17-07-2016&nbsp; 13:01</div>
</div>
</body></html>
